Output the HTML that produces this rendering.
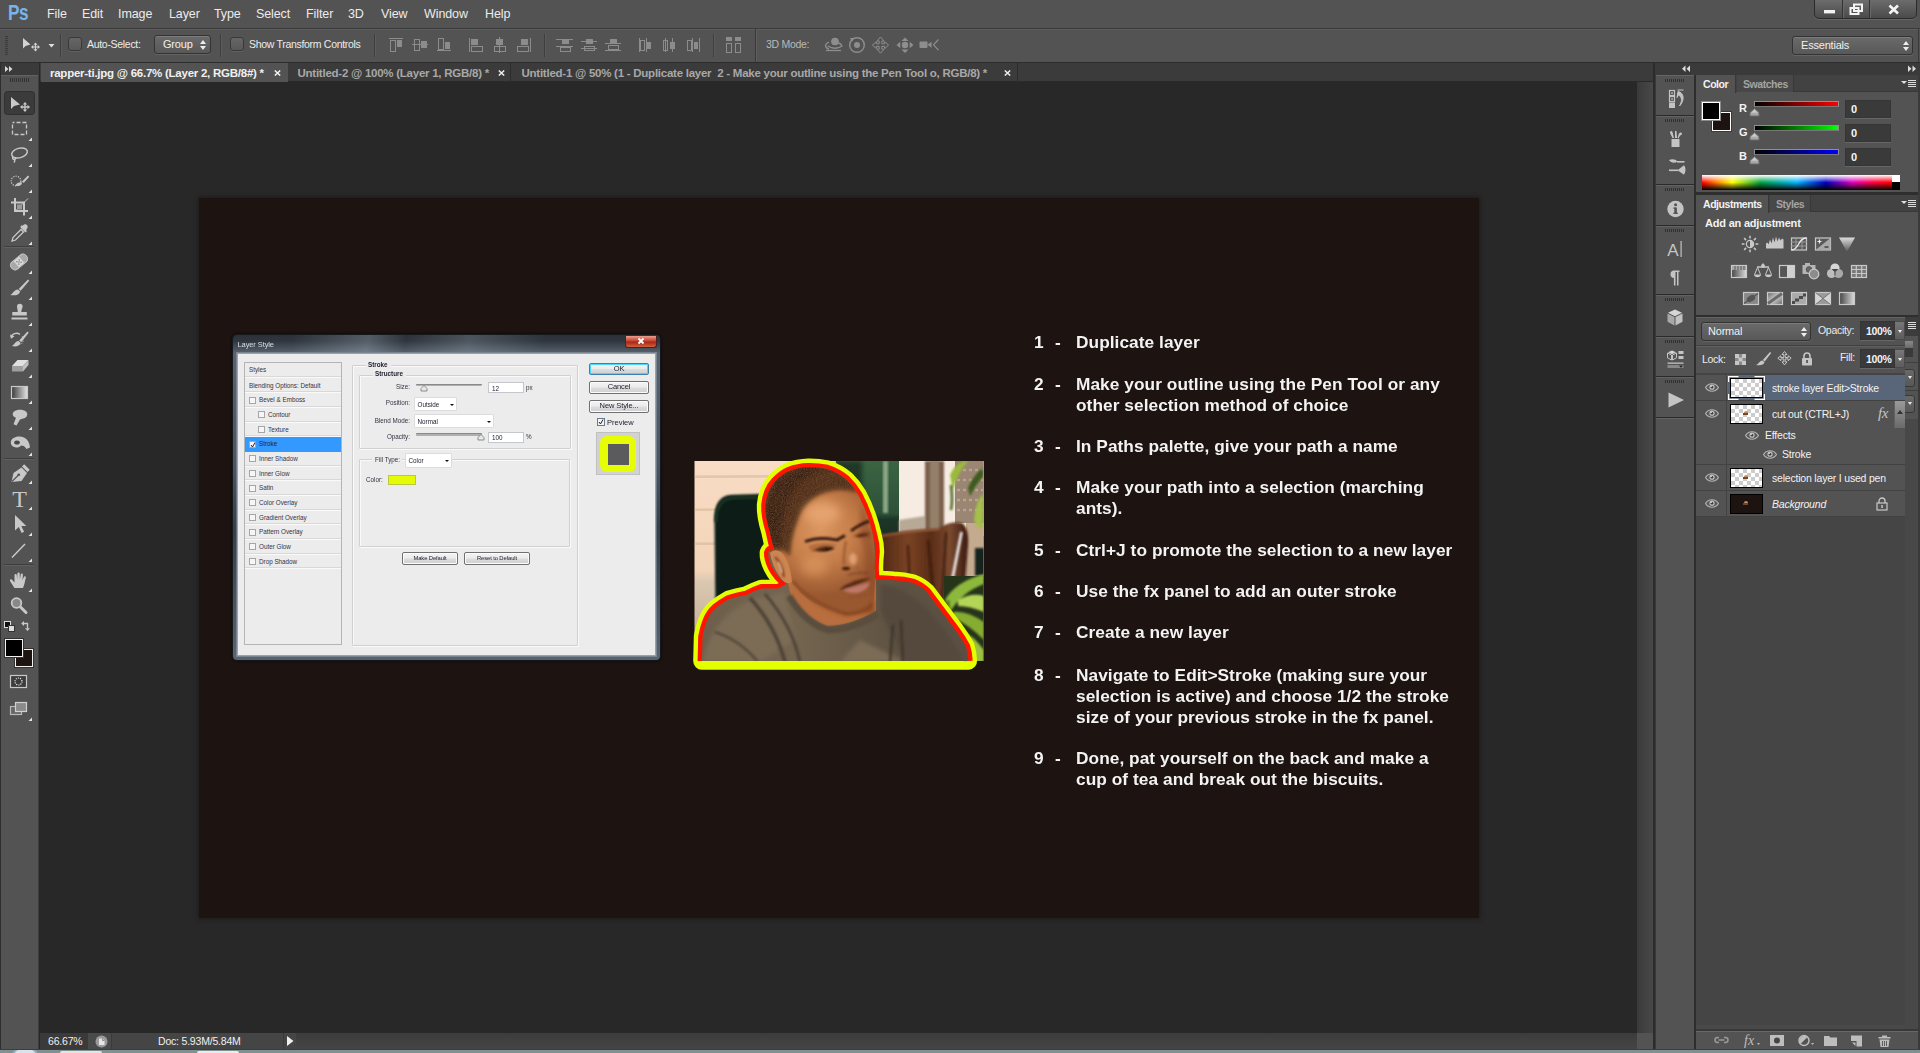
<!DOCTYPE html>
<html><head><meta charset="utf-8"><title>Photoshop</title>
<style>
*{box-sizing:border-box;margin:0;padding:0}
html,body{width:1920px;height:1053px;overflow:hidden;background:#282828;font-family:"Liberation Sans",sans-serif;font-size:11px;color:#e4e4e4}
.a{position:absolute}
#menubar{left:0;top:0;width:1920px;height:29px;background:#535353;border-bottom:1px solid #3a3a3a}
#menubar span{position:absolute;top:5.5px;font-size:13.5px;color:#ececec;letter-spacing:-0.1px;transform:scaleX(.925);transform-origin:0 0;white-space:nowrap}
#menubar b{position:absolute;left:7.5px;top:1px;font-size:21.5px;font-weight:bold;color:#78b4ea;transform:scaleX(.8);transform-origin:0 0;letter-spacing:-0.5px}
#optbar{left:0;top:29px;width:1920px;height:34px;background:#535353;box-shadow:inset 0 1px 0 #5e5e5e;border-bottom:1px solid #2c2c2c}
#tabbar{left:40px;top:63px;width:1613px;height:19px;background:#3b3b3b;border-bottom:1px solid #2a2a2a}
.tab{position:absolute;top:0;height:19px;font-size:11.5px;line-height:21px;color:#a8a8a8;white-space:nowrap;font-weight:bold;letter-spacing:-0.25px}
.tab i{position:absolute;top:0;font-style:normal;font-weight:bold;font-size:11px}
.tab.act{background:#535353;color:#f0f0f0}
#toolbar{left:0;top:63px;width:39px;height:986px;background:#535353;border-right:1px solid #3c3c3c}
#canvas{left:40px;top:82px;width:1597px;height:951px;background:#282828}
#doc{left:199px;top:198px;width:1280px;height:720px;background:#1d1311;box-shadow:0 0 4px 1px rgba(20,20,20,.6)}
#status{left:40px;top:1033px;width:1597px;height:16px;background:#454545;overflow:hidden}
#taskbar{left:0;top:1049px;width:1920px;height:4px;background:#7e9391;border-top:1px solid #36403f;overflow:hidden}

.cb{width:14px;height:14px;border:1px solid #393939;border-radius:3px;background:linear-gradient(#666,#585858);box-shadow:0 1px 0 rgba(255,255,255,.08)}
.ot{font-size:10.5px;color:#ececec;white-space:nowrap;letter-spacing:-0.3px}
.dd{height:19px;border:1px solid #333;border-radius:3px;background:linear-gradient(#6a6a6a,#585858);box-shadow:0 1px 0 rgba(255,255,255,.1), inset 0 1px 0 rgba(255,255,255,.12)}
.dd span{position:absolute;top:2px;font-size:11px;color:#f0f0f0;letter-spacing:-0.2px}
.ud{position:absolute;top:4px;width:7px;height:10px}
.ud:before{content:"";position:absolute;left:0;top:0;border:3.5px solid transparent;border-top:0;border-bottom:4px solid #ededed}
.ud:after{content:"";position:absolute;left:0;top:6px;border:3.5px solid transparent;border-bottom:0;border-top:4px solid #ededed}

.b{font-weight:bold;color:#f2f2f2;font-size:11px;white-space:nowrap;letter-spacing:-0.2px}
.ptabs{position:absolute;left:0;width:224px;height:17px;background:#424242;border-bottom:1px solid #383838}
.pt{position:absolute;top:0;height:17px;background:#484848;border-right:1px solid #383838}
.pt span{position:absolute;top:3px;font-size:10.5px;font-weight:bold;color:#a4a4a4;letter-spacing:-0.45px;white-space:nowrap}
.pt.on{background:#535353;height:18px}
.pt.on span{color:#f2f2f2}
.pm{position:absolute;left:205px;top:5px;width:15px;height:8px}
.pm:before{content:"";position:absolute;left:0;top:1px;border:3px solid transparent;border-bottom:0;border-top:3.500px solid #ddd}
.pm:after{content:"";position:absolute;left:7px;top:0;width:8px;height:1px;background:#ddd;box-shadow:0 2px 0 #ddd,0 4px 0 #ddd,0 6px 0 #ddd}
.vb{background:#3a3a3a;border:1px solid #353535;box-shadow:0 1px 0 rgba(255,255,255,.12)}
.vb span{position:absolute;top:2px;font-size:11px;font-weight:bold;color:#f4f4f4}

.lt{font-size:10.5px;color:#ececec;white-space:nowrap;letter-spacing:-0.3px}
.ln{font-size:10.5px;color:#f2f2f2;white-space:nowrap;letter-spacing:-0.2px}
.ab{width:10px;height:19px;background:linear-gradient(#777,#5c5c5c);border:1px solid #4a4a4a;border-left:0}
.ab:after{content:"";position:absolute;left:3px;top:8px;border:2.500px solid transparent;border-bottom:0;border-top:3px solid #eee}

#steps{position:absolute;left:0;top:0;filter:blur(.35px)}
.st{position:absolute;left:0;font:bold 17.3px/21px "Liberation Sans",sans-serif;color:#f3f3f3;letter-spacing:.05px;white-space:nowrap}
.st b{position:absolute;top:0;font-weight:bold}
.st p{position:absolute;top:0}
#dlg{border-radius:4px;background:linear-gradient(180deg,#2b3138 0,#2f363e 6px,#4a535e 14px,#58626e 18px,#4a5561 40%,#353e49 60%,#59636f 100%);box-shadow:0 0 0 1px #15181c, 0 0 3px 1px rgba(0,0,0,.6);filter:blur(.3px);font-family:"Liberation Sans",sans-serif}
#dlg:before{content:"";position:absolute;left:60px;top:0;width:250px;height:17px;background:linear-gradient(100deg,rgba(255,255,255,0) 0,rgba(200,215,230,.25) 30%,rgba(255,255,255,0) 45%,rgba(200,215,230,.2) 70%,rgba(255,255,255,0) 100%)}
#dbody{background:#ececec;box-shadow:inset 0 0 0 1px #98a2ac,0 0 0 1px rgba(200,215,230,.3)}
.dt{font-size:6.3px;color:#334;white-space:nowrap;letter-spacing:0}
.gl{font-weight:bold;color:#223;background:#ececec;padding:0 3px 0 2px}
.grp{border:1px solid #d0d0d0;box-shadow:inset 1px 1px 0 #fafafa,1px 1px 0 #fafafa;border-radius:1px}
</style></head><body>
<div id="menubar" class="a">
<b>Ps</b><span style="left:47px">File</span><span style="left:82px">Edit</span><span style="left:118px">Image</span><span style="left:169px">Layer</span><span style="left:214px">Type</span><span style="left:256px">Select</span><span style="left:306px">Filter</span><span style="left:348px">3D</span><span style="left:381px">View</span><span style="left:424px">Window</span><span style="left:485px">Help</span>
<div class="a" id="winctl" style="left:1814px;top:-1px;width:103px;height:20px;border:1px solid #2b2b2b;border-radius:0 0 5px 5px;background:linear-gradient(#6c6c6c,#4a4a4a);box-shadow:0 1px 0 rgba(255,255,255,.12)">
<div class="a" style="left:27px;top:0;width:1px;height:18px;background:#333"></div><div class="a" style="left:28px;top:0;width:1px;height:18px;background:#686868"></div>
<div class="a" style="left:54px;top:0;width:1px;height:18px;background:#333"></div><div class="a" style="left:55px;top:0;width:1px;height:18px;background:#686868"></div>
<svg class="a" style="left:0;top:0" width="101" height="19" viewBox="0 0 101 19"><rect x="9" y="10" width="11" height="3.4" fill="#f4f4f4"/>
<path d="M39 4.5 h8 v6.5 h-8z M35.5 8 h8 v6 h-8z" fill="none" stroke="#f4f4f4" stroke-width="2"/>
<path d="M74.5 5.5 l8.5 8 M83 5.5 l-8.5 8" stroke="#f4f4f4" stroke-width="2.6" fill="none"/></svg>
</div></div>
<div id="optbar" class="a"><svg class="a" style="left:0;top:0" width="1920" height="33" viewBox="0 0 1920 33" shape-rendering="crispEdges"><rect x="5" y="7" width="3" height="1" fill="#3a3a3a"/><rect x="5" y="9" width="3" height="1" fill="#3a3a3a"/><rect x="5" y="11" width="3" height="1" fill="#3a3a3a"/><rect x="5" y="13" width="3" height="1" fill="#3a3a3a"/><rect x="5" y="15" width="3" height="1" fill="#3a3a3a"/><rect x="5" y="17" width="3" height="1" fill="#3a3a3a"/><rect x="5" y="19" width="3" height="1" fill="#3a3a3a"/><rect x="5" y="21" width="3" height="1" fill="#3a3a3a"/><rect x="5" y="23" width="3" height="1" fill="#3a3a3a"/><rect x="5" y="25" width="3" height="1" fill="#3a3a3a"/><path shape-rendering="geometricPrecision" d="M23 9 L23 19.5 L25.6 17 L30.5 15.600000000000001 Z" fill="#d4d4d4"/><path shape-rendering="geometricPrecision" d="M35.5 13.5 l-2 2.3 h1.4 v1.6 h-1.6 v-1.4 l-2.3 2 l2.3 2 v-1.4 h1.6 v1.6 h-1.4 l2 2.3 l2 -2.3 h-1.4 v-1.6 h1.6 v1.4 l2.3 -2 l-2.3 -2 v1.4 h-1.6 v-1.6 h1.4 Z" fill="#d4d4d4"/><path shape-rendering="geometricPrecision" d="M48.5 15 h6 l-3 3.4 Z" fill="#e0e0e0"/><rect x="60" y="5" width="1" height="23" fill="#3e3e3e"/><rect x="61" y="5" width="1" height="23" fill="#5c5c5c"/><rect x="220" y="5" width="1" height="23" fill="#3e3e3e"/><rect x="221" y="5" width="1" height="23" fill="#5c5c5c"/><rect x="374" y="5" width="1" height="23" fill="#3e3e3e"/><rect x="375" y="5" width="1" height="23" fill="#5c5c5c"/><rect x="544" y="5" width="1" height="23" fill="#3e3e3e"/><rect x="545" y="5" width="1" height="23" fill="#5c5c5c"/><rect x="713" y="5" width="1" height="23" fill="#3e3e3e"/><rect x="714" y="5" width="1" height="23" fill="#5c5c5c"/><rect x="755" y="0" width="1" height="33" fill="#3a3a3a"/><rect x="756" y="0" width="1" height="33" fill="#5e5e5e"/><rect x="389" y="9" width="14" height="1" fill="#8c8c8c"/><rect x="390.5" y="11.5" width="5" height="11" fill="none" stroke="#8c8c8c"/><rect x="397" y="11" width="5" height="7" fill="#8c8c8c"/><rect x="412" y="15" width="16" height="1" fill="#8c8c8c"/><rect x="414.5" y="10.5" width="5" height="11" fill="none" stroke="#8c8c8c"/><rect x="421" y="12" width="6" height="7" fill="#8c8c8c"/><rect x="437" y="21" width="14" height="1" fill="#8c8c8c"/><rect x="438.5" y="9.5" width="5" height="11" fill="none" stroke="#8c8c8c"/><rect x="445" y="13" width="5" height="7" fill="#8c8c8c"/><rect x="469" y="9" width="1" height="14" fill="#8c8c8c"/><rect x="471" y="10" width="7" height="6" fill="#8c8c8c"/><rect x="471.5" y="17.5" width="11" height="5" fill="none" stroke="#8c8c8c"/><rect x="499" y="8" width="1" height="16" fill="#8c8c8c"/><rect x="496" y="10" width="7" height="6" fill="#8c8c8c"/><rect x="494.5" y="17.5" width="11" height="5" fill="none" stroke="#8c8c8c"/><rect x="530" y="9" width="1" height="14" fill="#8c8c8c"/><rect x="521" y="10" width="7" height="6" fill="#8c8c8c"/><rect x="517.5" y="17.5" width="11" height="5" fill="none" stroke="#8c8c8c"/><rect x="556" y="10" width="17" height="1" fill="#8c8c8c"/><rect x="562" y="11" width="7" height="4" fill="#8c8c8c"/><rect x="556" y="17" width="17" height="1" fill="#8c8c8c"/><rect x="560.5" y="18.5" width="10" height="4" fill="none" stroke="#8c8c8c"/><rect x="581" y="12" width="16" height="1" fill="#8c8c8c"/><rect x="586" y="10" width="7" height="5" fill="#8c8c8c"/><rect x="581" y="19" width="16" height="1" fill="#8c8c8c"/><rect x="584.5" y="17.5" width="10" height="4" fill="none" stroke="#8c8c8c"/><rect x="610" y="10" width="7" height="4" fill="#8c8c8c"/><rect x="605" y="14" width="16" height="1" fill="#8c8c8c"/><rect x="608.5" y="16.5" width="10" height="4" fill="none" stroke="#8c8c8c"/><rect x="605" y="21" width="16" height="1" fill="#8c8c8c"/><rect x="639" y="9" width="1" height="14" fill="#8c8c8c"/><rect x="640.5" y="11.5" width="4" height="10" fill="none" stroke="#8c8c8c"/><rect x="646" y="9" width="1" height="14" fill="#8c8c8c"/><rect x="647" y="13" width="4" height="7" fill="#8c8c8c"/><rect x="665" y="9" width="1" height="14" fill="#8c8c8c"/><rect x="663.5" y="11.5" width="4" height="10" fill="none" stroke="#8c8c8c"/><rect x="672" y="9" width="1" height="14" fill="#8c8c8c"/><rect x="670" y="13" width="5" height="7" fill="#8c8c8c"/><rect x="687.5" y="11.5" width="4" height="10" fill="none" stroke="#8c8c8c"/><rect x="692" y="9" width="1" height="14" fill="#8c8c8c"/><rect x="694" y="13" width="4" height="7" fill="#8c8c8c"/><rect x="699" y="9" width="1" height="14" fill="#8c8c8c"/><rect x="726" y="8" width="6" height="4" fill="#8c8c8c"/><rect x="726.5" y="14.5" width="5" height="9" fill="none" stroke="#8c8c8c"/><rect x="735" y="8" width="6" height="4" fill="#8c8c8c"/><rect x="735.5" y="14.5" width="5" height="9" fill="none" stroke="#8c8c8c"/><g shape-rendering="geometricPrecision" fill="none" stroke="#8e8e8e" stroke-width="1.3"><circle cx="835" cy="12.5" r="3.2" fill="#8e8e8e"/><path shape-rendering="geometricPrecision" d="M829 20 c-4 -1 -5 -5 0 -7 M828 17 c4 3 10 3 14 0 c-1 -2 -2 -3 -4 -3"/><path shape-rendering="geometricPrecision" d="M826 21.5 h15"/></g><g shape-rendering="geometricPrecision" fill="none" stroke="#8e8e8e" stroke-width="1.4"><circle cx="857" cy="16" r="7.3"/><circle cx="857" cy="16" r="3" fill="#8e8e8e" stroke="none"/><path shape-rendering="geometricPrecision" d="M850 9 l4 0 l-2 4z" fill="#8e8e8e" stroke="none"/></g><path shape-rendering="geometricPrecision" d="M880.5 8 l-3.5 4 h2.2 v2.8 h-2.8 v-2.2 l-4 3.5 l4 3.5 v-2.2 h2.8 v2.8 h-2.2 l3.5 4 l3.5 -4 h-2.2 v-2.8 h2.8 v2.2 l4 -3.5 l-4 -3.5 v2.2 h-2.8 v-2.8 h2.2 Z" fill="none" stroke="#8e8e8e" stroke-width="1"/><g shape-rendering="geometricPrecision" fill="#8e8e8e"><circle cx="905" cy="16" r="3.2"/><path shape-rendering="geometricPrecision" d="M905 8.5 l-3.5 3.5 h7z M905 24 l-3.5 -3.5 h7z M896.5 16 l3.8 -3.3 v6.6z M913.5 16 l-3.8 -3.3 v6.6z"/></g><g shape-rendering="geometricPrecision" fill="#8e8e8e"><rect x="919.5" y="12.5" width="8" height="6.5" rx="1"/><path shape-rendering="geometricPrecision" d="M927.5 15.700000000000003 l4 -3 v6z"/><path shape-rendering="geometricPrecision" d="M938.5 10.5 l-5 5.3 l5 5.3" fill="none" stroke="#8e8e8e" stroke-width="1.2"/></g></svg>
<div class="cb a" style="left:68px;top:8px"></div>
<span class="ot a" style="left:87px;top:9px">Auto-Select:</span>
<div class="dd a" style="left:154px;top:6px;width:57px"><span style="left:8px">Group</span><i class="ud" style="left:45px"></i></div>
<div class="cb a" style="left:230px;top:8px"></div>
<span class="ot a" style="left:249px;top:9px">Show Transform Controls</span>
<span class="ot a" style="left:766px;top:9px;color:#b9b9b9">3D Mode:</span>
<div class="dd a" style="left:1792px;top:7px;width:121px"><span style="left:8px">Essentials</span><i class="ud" style="left:110px"></i></div>
<div class="a" style="left:1918px;top:0;width:1px;height:33px;background:#3a3a3a"></div>
</div>
<div id="toolbar" class="a"><svg class="a" style="left:0;top:0" width="39" height="986" viewBox="0 63 39 986"><rect x="0" y="63" width="38" height="12" fill="#3a3a3a"/><path d="M5 66 l3.5 3 l-3.5 3z M9 66 l3.5 3 l-3.5 3z" fill="#d8d8d8"/><rect x="0" y="75" width="38" height="1" fill="#626262"/><rect x="10" y="78" width="1" height="4" fill="#333" shape-rendering="crispEdges"/><rect x="12" y="78" width="1" height="4" fill="#333" shape-rendering="crispEdges"/><rect x="14" y="78" width="1" height="4" fill="#333" shape-rendering="crispEdges"/><rect x="16" y="78" width="1" height="4" fill="#333" shape-rendering="crispEdges"/><rect x="18" y="78" width="1" height="4" fill="#333" shape-rendering="crispEdges"/><rect x="20" y="78" width="1" height="4" fill="#333" shape-rendering="crispEdges"/><rect x="22" y="78" width="1" height="4" fill="#333" shape-rendering="crispEdges"/><rect x="24" y="78" width="1" height="4" fill="#333" shape-rendering="crispEdges"/><rect x="26" y="78" width="1" height="4" fill="#333" shape-rendering="crispEdges"/><rect x="28" y="78" width="1" height="4" fill="#333" shape-rendering="crispEdges"/><rect x="4.5" y="91.5" width="30" height="23" rx="3" fill="#3b3b3b" stroke="#303030"/><path d="M11 97 v12 l3 -3 l6 -1.5z" fill="#c8c8c8"/><path d="M25 102 l-2.2 2.5 h1.5 v1.8 h-1.8 v-1.5 l-2.5 2.2 l2.5 2.2 v-1.5 h1.8 v1.8 h-1.5 l2.2 2.5 l2.2 -2.5 h-1.5 v-1.8 h1.8 v1.5 l2.5 -2.2 l-2.5 -2.2 v1.5 h-1.8 v-1.8 h1.5z" fill="#c8c8c8"/><rect x="12.5" y="122.5" width="14" height="12" fill="none" stroke="#c8c8c8" stroke-width="1.3" stroke-dasharray="4 2" stroke-dashoffset="2"/><path d="M32 137.5 v3.5 h-3.5z" fill="#e4e4e4"/><g fill="none" stroke="#c8c8c8" stroke-width="1.5"><ellipse cx="19.5" cy="153" rx="8" ry="4.8" transform="rotate(-15 19.5 153)"/><path d="M13 156.5 c-1 1.5 0 3 1.5 3 c1 0 1.5 -1 0.5 -2 M14.5 159.5 c0.5 1 0.5 2 -0.5 3"/></g><path d="M32 163.5 v3.5 h-3.5z" fill="#e4e4e4"/><circle cx="16" cy="181" r="4.8" fill="none" stroke="#c8c8c8" stroke-width="1.2" stroke-dasharray="1.2 1.2"/><path d="M15 185.5 c2 -3 5 -4 7 -3 c0 3 -3 4.5 -7 3z" fill="#c8c8c8"/><path d="M22 181.5 l6 -6 l1.2 1.2 l-5.5 6.3z" fill="#c8c8c8"/><path d="M32 189.5 v3.5 h-3.5z" fill="#e4e4e4"/><g fill="none" stroke="#c8c8c8" stroke-width="2"><path d="M15 198 v13 h13 M11 202.5 h13 v13"/></g><path d="M16.5 210 l11.5 -11.5" stroke="#c8c8c8" stroke-width="1"/><rect x="17" y="204.5" width="5" height="5" fill="#9a9a9a"/><path d="M32 215.5 v3.5 h-3.5z" fill="#e4e4e4"/><g><path d="M12 241 l1 -3.5 l8 -8 l2.5 2.5 l-8 8z" fill="none" stroke="#c8c8c8" stroke-width="1.3"/><path d="M20.5 227.5 l5 5 l1.5 -1.5 l-1 -1 c2 -2 2 -4 1 -5 c-1 -1 -3 -1 -5 1 l-1 -1z" fill="#c8c8c8"/></g><path d="M32 241.5 v3.5 h-3.5z" fill="#e4e4e4"/><rect x="4" y="246" width="30" height="1" fill="#3e3e3e"/><rect x="4" y="247" width="30" height="1" fill="#606060"/><g transform="rotate(-40 19 262)"><rect x="9.5" y="257.5" width="19" height="9" rx="4" fill="#a8a8a8" stroke="#c8c8c8" stroke-width="1"/><rect x="15.5" y="258" width="7" height="8" fill="#d8d8d8"/><g fill="#777"><circle cx="17.5" cy="260.5" r=".7"/><circle cx="20.5" cy="260.5" r=".7"/><circle cx="17.5" cy="263.5" r=".7"/><circle cx="20.5" cy="263.5" r=".7"/><circle cx="19" cy="262" r=".7"/></g></g><path d="M32 270.5 v3.5 h-3.5z" fill="#e4e4e4"/><path d="M28 279.5 l1.2 1.2 l-8.5 10 l-2 -1.7z" fill="#c8c8c8"/><path d="M18 289.5 l2.2 2 c-1 3.5 -5 4.5 -10 3.5 c3 -1 3 -5 7.800 -5.500z" fill="#c8c8c8"/><path d="M32 296.5 v3.5 h-3.5z" fill="#e4e4e4"/><path d="M17 306.500 a2.800 2.800 0 0 1 5.600 0 c0 2 -1.300 3 -1.300 5.500 h5.500 v3.500 h-14.500 v-3.500 h5.500 c0 -2.500 -0.800 -3.500 -0.800 -5.500z" fill="#c8c8c8"/><rect x="11.500" y="317.500" width="16" height="2" fill="#c8c8c8"/><path d="M32 322.5 v3.5 h-3.5z" fill="#e4e4e4"/><path d="M27.500 331.500 l1.200 1.200 l-7.500 9.500 l-2 -1.700z" fill="#c8c8c8"/><path d="M18.500 341 l2.200 2 c-1 3 -4.500 4 -9 3 c3 -1 3 -4.500 6.800 -5z" fill="#c8c8c8"/><path d="M11 337.500 a5.500 5 0 0 1 9 -3" fill="none" stroke="#c8c8c8" stroke-width="1.400"/><path d="M10 334.500 l1.200 4.200 l3.300 -2.500z" fill="#c8c8c8"/><path d="M22 336 a6 6 0 0 1 -2 9" fill="none" stroke="#c8c8c8" stroke-width="1" stroke-dasharray="1 1.500"/><path d="M32 348.5 v3.5 h-3.5z" fill="#e4e4e4"/><path d="M12 366 l5.500 -6 h11 l-5.500 6z" fill="#e0e0e0"/><path d="M12 366 h11 v5.500 h-11z" fill="#9f9f9f"/><path d="M23 366 l5.500 -6 v5 l-5.500 6.500z" fill="#c0c0c0"/><path d="M32 374.5 v3.5 h-3.5z" fill="#e4e4e4"/><defs><linearGradient id="tg"><stop offset="0" stop-color="#3a3a3a"/><stop offset="1" stop-color="#e6e6e6"/></linearGradient></defs><rect x="11.500" y="386.500" width="16" height="12" fill="url(#tg)" stroke="#c8c8c8" stroke-width="1.200"/><path d="M32 400.5 v3.5 h-3.5z" fill="#e4e4e4"/><path d="M14 411.500 c3 -2.500 9 -2.500 12 0 c2 2 1.500 5 -1 6.500 l-5 1.500 l-3.500 6 l-3 -1.200 l2.500 -6.500 c-3 -1 -4.500 -4 -2 -6.300z" fill="#c8c8c8"/><path d="M32 426.5 v3.5 h-3.5z" fill="#e4e4e4"/><path d="M11 441 c1.500 -4 8 -5.500 13 -3.500 c3.500 1.500 5.500 5 6 10 l-3.500 1.500 c-1.500 -2.500 -3 -3.500 -5.500 -3.500 c-2 3 -8 2.500 -9.500 -0.500 c-0.800 -1.500 -0.800 -2.800 -0.500 -4z" fill="#c8c8c8"/><ellipse cx="17" cy="442.500" rx="2.800" ry="2" fill="#484848"/><path d="M32 452.5 v3.5 h-3.5z" fill="#e4e4e4"/><rect x="4" y="458" width="30" height="1" fill="#3e3e3e"/><rect x="4" y="459" width="30" height="1" fill="#606060"/><path d="M11.500 482 l2 -9 l8 -5.500 l5.500 5.500 l-5.500 8z" fill="#c8c8c8"/><path d="M22 466.500 l2.200 -2.200 l5.500 5.500 l-2.200 2.200z" fill="#c8c8c8"/><path d="M12 481.500 l6.500 -6.500" stroke="#505050" stroke-width="1.100"/><circle cx="18.800" cy="474.700" r="1.300" fill="#505050"/><path d="M32 480.5 v3.5 h-3.5z" fill="#e4e4e4"/><text x="19.500" y="507" font-family="Liberation Serif,serif" font-size="24" text-anchor="middle" fill="#c8c8c8">T</text><path d="M32 506.5 v3.5 h-3.5z" fill="#e4e4e4"/><path d="M15 515 v15.500 l3.800 -3.500 l2.800 6 l2.500 -1.200 l-2.800 -5.800 h5z" fill="#c8c8c8"/><path d="M32 532.5 v3.5 h-3.5z" fill="#e4e4e4"/><path d="M12 557.500 l13 -13.500" stroke="#c8c8c8" stroke-width="1.500"/><path d="M32 558.5 v3.5 h-3.5z" fill="#e4e4e4"/><rect x="4" y="564" width="30" height="1" fill="#3e3e3e"/><rect x="4" y="565" width="30" height="1" fill="#606060"/><path d="M14.500 588 c-1.500 -2.500 -3.500 -5 -4.500 -7 c-0.500 -1.500 1.200 -2.300 2.300 -1 l2.200 2.500 v-7.500 c0 -1.500 2.200 -1.500 2.300 0 l0.300 4.500 l0.300 -6 c0 -1.500 2.300 -1.500 2.300 0 l0.200 6 l0.800 -5 c0.200 -1.500 2.300 -1.200 2.200 0.300 l-0.400 5.500 l1.300 -3.200 c0.500 -1.300 2.300 -0.800 2 0.700 c-0.800 3.500 -1.300 7 -2.800 10.200z" fill="#c8c8c8"/><path d="M32 588.5 v3.5 h-3.5z" fill="#e4e4e4"/><circle cx="16.500" cy="603" r="4.800" fill="#888" stroke="#c8c8c8" stroke-width="1.800"/><path d="M20.500 607 l5.500 5.500" stroke="#c8c8c8" stroke-width="3" stroke-linecap="round"/><rect x="4.500" y="621.500" width="6" height="6" fill="#111" stroke="#ddd"/><rect x="8.500" y="625.500" width="6" height="6" fill="#ddd" stroke="#333"/><path d="M23 623.500 h4.500 v5" fill="none" stroke="#c8c8c8" stroke-width="1.300"/><path d="M21.200 623.500 l2.800 -2.500 v5z M27.500 631 l-2.500 -2.800 h5z" fill="#c8c8c8"/><rect x="15.500" y="649.500" width="17" height="17" fill="#1d1311" stroke="#f0f0f0" stroke-width="1"/><rect x="14.500" y="648.500" width="19" height="19" fill="none" stroke="#333" stroke-width="1"/><rect x="4.500" y="638.500" width="19" height="19" fill="none" stroke="#333"/><rect x="5.500" y="639.500" width="17" height="17" fill="#000" stroke="#f0f0f0" stroke-width="1"/><rect x="10.500" y="675.500" width="16" height="12" fill="#3c3c3c" stroke="#c8c8c8" stroke-width="1.200"/><circle cx="18.500" cy="681.500" r="3.500" fill="none" stroke="#f0f0f0" stroke-width="1.200" stroke-dasharray="1.100 1.100"/><rect x="10.500" y="706.500" width="11" height="8" fill="#666" stroke="#b8b8b8" stroke-width="1.200"/><rect x="15.500" y="702.500" width="11" height="9" fill="#8a8a8a" stroke="#d0d0d0" stroke-width="1.200"/><path d="M32 717.5 v3.5 h-3.5z" fill="#e4e4e4"/><rect x="0" y="63" width="1" height="986" fill="#2e2e2e"/></svg></div>
<div id="tabbar" class="a">
<div class="tab act" style="left:1px;width:247px;padding-left:9px">rapper-ti.jpg @ 66.7% (Layer 2, RGB/8#) *<svg style="position:absolute;left:233px;top:7px" width="7" height="6"><path d="M0.800 0.500 l5.400 5 M6.200 0.500 l-5.400 5" stroke="#f4f4f4" stroke-width="1.500"/></svg></div>
<div class="tab" style="left:248px;width:223px;padding-left:9.5px;border-right:1px solid #2c2c2c">Untitled-2 @ 100% (Layer 1, RGB/8) *<svg style="position:absolute;left:210px;top:7px" width="7" height="6"><path d="M0.800 0.500 l5.400 5 M6.200 0.500 l-5.400 5" stroke="#ededed" stroke-width="1.500"/></svg></div>
<div class="tab" style="left:471px;width:507px;padding-left:10.500px;border-right:1px solid #2c2c2c;white-space:pre">Untitled-1 @ 50% (1 - Duplicate layer  2 - Make your outline using the Pen Tool o, RGB/8) *<svg style="position:absolute;left:493px;top:7px" width="7" height="6"><path d="M0.800 0.500 l5.400 5 M6.200 0.500 l-5.400 5" stroke="#ededed" stroke-width="1.500"/></svg></div>
</div>
<div id="canvas" class="a"></div>
<div id="doc" class="a"><div id="steps"><div class="st" style="top:133.8px"><b style="left:835px">1</b><b style="left:856px">-</b><p style="left:877px">Duplicate layer</p></div><div class="st" style="top:175.9px"><b style="left:835px">2</b><b style="left:856px">-</b><p style="left:877px">Make your outline using the Pen Tool or any<br>other selection method of choice</p></div><div class="st" style="top:238.1px"><b style="left:835px">3</b><b style="left:856px">-</b><p style="left:877px">In Paths palette, give your path a name</p></div><div class="st" style="top:279.1px"><b style="left:835px">4</b><b style="left:856px">-</b><p style="left:877px">Make your path into a selection (marching<br>ants).</p></div><div class="st" style="top:341.9px"><b style="left:835px">5</b><b style="left:856px">-</b><p style="left:877px">Ctrl+J to promote the selection to a new layer</p></div><div class="st" style="top:383.3px"><b style="left:835px">6</b><b style="left:856px">-</b><p style="left:877px">Use the fx panel to add an outer stroke</p></div><div class="st" style="top:424.1px"><b style="left:835px">7</b><b style="left:856px">-</b><p style="left:877px">Create a new layer</p></div><div class="st" style="top:466.9px"><b style="left:835px">8</b><b style="left:856px">-</b><p style="left:877px">Navigate to Edit&gt;Stroke (making sure your<br>selection is active) and choose 1/2 the stroke<br>size of your previous stroke in the fx panel.</p></div><div class="st" style="top:550.2px"><b style="left:835px">9</b><b style="left:856px">-</b><p style="left:877px">Done, pat yourself on the back and make a<br>cup of tea and break out the biscuits.</p></div></div><svg class="a" id="photo" style="left:0;top:0;filter:blur(.4px)" width="1280" height="720" viewBox="199 198 1280 720"><defs>
<clipPath id="pc"><rect x="694.5" y="461" width="289" height="200"/></clipPath>
<clipPath id="sc"><path d="M701.9 661 L702.5 636.4 Q704 628 706.8 621 Q710 613 715.6 608 Q722 603 728.7 599.3 Q737 596.5 746 595 Q754 591 761.4 588.4 L777.8 588.4 L786.5 584 Q777 577 772 567 Q768 559 768.300 552.800 Q770 548 774.500 550.500 Q772 542 770 532 Q765 516 765.500 505 Q767 490 775 481.500 Q782 474 789.200 470.900 Q798 467.500 808.200 467.200 Q818 467 827.200 469 Q838 472.500 846.200 479.500 Q853 486 858 494.600 Q864 506 867.500 516 Q871 526 873 535 Q875.500 544 875.500 551.600 Q874.500 560 874.500 568.200 L875 579 L893.700 580.200 Q904 580.500 912.600 582.800 Q921 586 926.900 591.900 L941.100 610.900 L955.400 629.900 Q962 639 966 646.500 Q968 653 968.400 661 Z"/></clipPath>
<filter id="b1" x="-20%" y="-20%" width="140%" height="140%"><feGaussianBlur stdDeviation="1"/></filter>
<filter id="b2" x="-20%" y="-20%" width="140%" height="140%"><feGaussianBlur stdDeviation="2.2"/></filter>
<filter id="b3" x="-30%" y="-30%" width="160%" height="160%"><feGaussianBlur stdDeviation="5"/></filter>
<filter id="grain" x="0" y="0" width="100%" height="100%"><feTurbulence type="fractalNoise" baseFrequency="1.1" numOctaves="2" seed="3" result="n"/><feColorMatrix in="n" type="matrix" values="0 0 0 0 0.18  0 0 0 0 0.09  0 0 0 0 0.04  0.9 0.9 0 0 -0.55"/><feComposite operator="in" in2="SourceGraphic"/></filter>
<linearGradient id="wall" x1="0" y1="0" x2="0" y2="1"><stop offset="0" stop-color="#f8dcc4"/><stop offset=".55" stop-color="#f2d4b8"/><stop offset=".6" stop-color="#dcc8b0"/><stop offset="1" stop-color="#b8a68e"/></linearGradient>
<linearGradient id="door" x1="0" y1="0" x2="0" y2="1"><stop offset="0" stop-color="#3a6442"/><stop offset=".4" stop-color="#2e5238"/><stop offset=".45" stop-color="#1c3626"/><stop offset="1" stop-color="#10201a"/></linearGradient>
<linearGradient id="lchair" x1="0" y1="0" x2="1" y2="0"><stop offset="0" stop-color="#4a2212"/><stop offset=".35" stop-color="#7a4424"/><stop offset=".6" stop-color="#5a2c16"/><stop offset=".8" stop-color="#7a4a30"/><stop offset="1" stop-color="#3a1a10"/></linearGradient>
<radialGradient id="skin" cx="820" cy="530" r="66" gradientUnits="userSpaceOnUse"><stop offset="0" stop-color="#dc9660"/><stop offset=".5" stop-color="#c67e4a"/><stop offset="1" stop-color="#9a5830"/></radialGradient>
<linearGradient id="shirt" x1="0" y1="0" x2="1" y2="0"><stop offset="0" stop-color="#6c5e4a"/><stop offset=".35" stop-color="#74654f"/><stop offset=".7" stop-color="#5e5242"/><stop offset="1" stop-color="#585044"/></linearGradient>
</defs><g clip-path="url(#pc)"><rect x="694" y="461" width="290" height="200" fill="url(#wall)"/><path d="M694 477 L790 476" stroke="#d0ac8c" stroke-width="1.300" filter="url(#b1)"/><path d="M694 510 L790 509" stroke="#d0ac8c" stroke-width="1.300" filter="url(#b1)"/><path d="M694 544 L790 543" stroke="#d0ac8c" stroke-width="1.300" filter="url(#b1)"/><path d="M716 662 L714.500 520 Q714 497 730 495 L790 493 L790 662 Z" fill="#0b1a13" filter="url(#b1)"/><path d="M716 522 Q716 500 732 498 L765 497" stroke="#1c3628" stroke-width="3" fill="none" filter="url(#b1)"/><rect x="836" y="461" width="64" height="130" fill="url(#door)"/><rect x="836" y="461" width="26" height="130" fill="#0e1c14" opacity=".6" filter="url(#b2)"/><rect x="883" y="461" width="5" height="52" fill="#8ca684" filter="url(#b1)"/><rect x="899" y="461" width="85" height="75" fill="#f6ece2"/><path d="M899 520 L925 516 L925 536 L899 536Z" fill="#b8a896" filter="url(#b1)"/><rect x="925" y="461" width="19" height="72" fill="#7a604c" filter="url(#b1)"/><rect x="930" y="461" width="9" height="72" fill="#94806a" filter="url(#b1)"/><rect x="955" y="461" width="30" height="62" fill="#9a8672"/><path d="M957 470 h26 M957 480 h26 M957 490 h26 M957 500 h26 M957 510 h26" stroke="#c4b29c" stroke-width="2.500" stroke-dasharray="3 3" opacity=".7"/><rect x="966" y="523" width="18" height="56" fill="#c4aa8e"/><rect x="975" y="548" width="10" height="28" fill="#14201e" filter="url(#b1)"/><path d="M876 536 Q905 530 938 529 Q950 520 962 523 Q969 528 968 545 L964 600 L940 640 L876 600 Z" fill="url(#lchair)" filter="url(#b1)"/><path d="M880 536 Q910 531 940 529" stroke="#94583a" stroke-width="2" fill="none" filter="url(#b1)"/><path d="M908 545 L910 590 M928 540 L934 600 M946 532 L942 600" stroke="#2e140a" stroke-width="2" filter="url(#b1)" opacity=".8"/><path d="M961.500 532 L952 581" stroke="#ececec" stroke-width="2.800" filter="url(#b1)"/><rect x="944" y="576" width="41" height="90" fill="#26341a"/><g filter="url(#b1)"><path d="M950 475 Q954 465 964 461 L968 461 Q958 472 953 490 Z" fill="#9aba3c"/><path d="M968 488 Q974 474 983 468 L983 476 Q975 486 970 496Z" fill="#3e5c1e"/><path d="M974 520 Q976 500 983 494 L983 528 Q978 530 974 520Z" fill="#a4c048"/><path d="M951 485 Q953 500 951 510" stroke="#4a6420" stroke-width="2.500" fill="none"/><path d="M945 600 Q955 582 984 574 L984 584 Q962 592 950 612Z" fill="#8cb83a"/><path d="M958 600 Q972 592 984 596 L984 612 Q970 606 958 606Z" fill="#b4d458"/><path d="M953 612 Q966 610 984 622 L984 640 Q968 624 953 618Z" fill="#86ac30"/><path d="M962 632 Q972 634 984 650 L984 662 L975 662 Q970 645 962 632Z" fill="#9cc040"/><path d="M948 600 Q950 630 958 662" stroke="#52741e" stroke-width="3" fill="none"/></g></g><path d="M701.9 661 L702.5 636.4 Q704 628 706.8 621 Q710 613 715.6 608 Q722 603 728.7 599.3 Q737 596.5 746 595 Q754 591 761.4 588.4 L777.8 588.4 L786.5 584 Q777 577 772 567 Q768 559 768.300 552.800 Q770 548 774.500 550.500 Q772 542 770 532 Q765 516 765.500 505 Q767 490 775 481.500 Q782 474 789.200 470.900 Q798 467.500 808.200 467.200 Q818 467 827.200 469 Q838 472.500 846.200 479.500 Q853 486 858 494.600 Q864 506 867.500 516 Q871 526 873 535 Q875.500 544 875.500 551.600 Q874.500 560 874.500 568.200 L875 579 L893.700 580.200 Q904 580.500 912.600 582.800 Q921 586 926.900 591.900 L941.100 610.900 L955.400 629.900 Q962 639 966 646.500 Q968 653 968.400 661 Z" fill="none" stroke="#e4ff00" stroke-width="17.4" stroke-linejoin="round"/><path d="M701.9 661 L702.5 636.4 Q704 628 706.8 621 Q710 613 715.6 608 Q722 603 728.7 599.3 Q737 596.5 746 595 Q754 591 761.4 588.4 L777.8 588.4 L786.5 584 Q777 577 772 567 Q768 559 768.300 552.800 Q770 548 774.500 550.500 Q772 542 770 532 Q765 516 765.500 505 Q767 490 775 481.500 Q782 474 789.200 470.900 Q798 467.500 808.200 467.200 Q818 467 827.200 469 Q838 472.500 846.200 479.500 Q853 486 858 494.600 Q864 506 867.500 516 Q871 526 873 535 Q875.500 544 875.500 551.600 Q874.500 560 874.500 568.200 L875 579 L893.700 580.200 Q904 580.500 912.600 582.800 Q921 586 926.900 591.900 L941.100 610.900 L955.400 629.900 Q962 639 966 646.500 Q968 653 968.400 661" fill="none" stroke="#ff1400" stroke-width="8.6" stroke-linejoin="round"/><g clip-path="url(#sc)"><rect x="694" y="461" width="290" height="205" fill="url(#shirt)"/><g filter="url(#b2)"><path d="M702 662 Q712 618 750 600 L785 592 L795 640 L760 662Z" fill="#7c6c56"/><path d="M880 584 Q925 588 965 662 L905 662 L880 610 Z" fill="#544a3e"/><path d="M860 640 L905 662 L840 662Z" fill="#7c6c56"/></g><g filter="url(#b1)" opacity=".85"><path d="M750 598 Q775 625 785 662" stroke="#463c30" stroke-width="3.500" fill="none"/><path d="M765 594 Q792 625 800 662" stroke="#4a4034" stroke-width="3" fill="none"/><path d="M715 632 Q740 640 758 662" stroke="#50463a" stroke-width="2.500" fill="none"/><path d="M893 625 L890 662 M901 620 L903 662" stroke="#3c342a" stroke-width="2.500" fill="none"/></g><path d="M786 575 L791 596 Q806 618 827 626 Q850 626 876 611 L876 570 Z" fill="#b86e3e"/><path d="M796 584 Q812 606 846 616 L874 612 L874 600 Q850 612 820 598Z" fill="#8a4a22" filter="url(#b2)"/><path d="M789 596 Q806 624 828 630 Q852 630 878 614" stroke="#5a4e3e" stroke-width="7" fill="none" filter="url(#b1)"/><path d="M768 552 Q764 500 780 478 Q800 462 830 468 Q860 482 870 520 Q877 548 875 580 L874 600 Q868 612 850 613.500 Q830 612 812 602 Q798 592 790 580 Z" fill="url(#skin)"/><path d="M862 505 Q874 530 876 580 L872 604 Q864 580 864 552 Q858 530 862 505Z" fill="#8a4a26" opacity=".45" filter="url(#b2)"/><path d="M764 550 Q758 500 776 478 Q796 458 830 466 Q850 474 859 492 Q838 486 820 494 Q802 504 796 524 Q790 540 790 556 Q784 548 776 550 Z" fill="#4e2c18" filter="url(#b2)"/><path d="M766 540 Q760 500 778 480 Q798 464 826 467 Q800 476 788 500 Q780 520 780 548 Z" fill="#2c160a" opacity=".75" filter="url(#b2)"/><path d="M764 550 Q758 500 776 478 Q796 458 830 466 Q850 474 859 492 Q838 486 820 494 Q802 504 796 524 Q790 540 790 556 Q784 548 776 550 Z" fill="#000" filter="url(#grain)" opacity=".9"/><path d="M770 553 Q774 548 781 552 Q790 560 792 582 Q786 586 780 577 Q772 566 770 553Z" fill="#cc8450"/><path d="M775 557 Q782 563 784 577" stroke="#7a3e20" stroke-width="2" fill="none" filter="url(#b1)"/><path d="M778 562 Q781 567 782 573" stroke="#f0c8a0" stroke-width="1.500" fill="none" filter="url(#b1)"/><ellipse cx="822" cy="513" rx="18" ry="11" fill="#eaa976" opacity=".8" filter="url(#b3)"/><ellipse cx="814" cy="566" rx="13" ry="10" fill="#e09a64" opacity=".6" filter="url(#b3)"/><g filter="url(#b1)"><path d="M805 541.500 Q820 536 837 540 L845 535.500" stroke="#2e1408" stroke-width="2.800" fill="none"/><path d="M851 531 Q860 524 869.500 521" stroke="#2e1408" stroke-width="2.800" fill="none"/><path d="M813 550.500 Q824 543.500 835 548 Q826 553.500 813 550.500Z" fill="#24100a"/><circle cx="826" cy="548.500" r="2.300" fill="#0e0604"/><path d="M855 536.500 Q862 531.500 870 534 Q862 539 855 536.500Z" fill="#24100a"/><path d="M846 541 Q843 556 844 565" stroke="#9a5830" stroke-width="2.500" fill="none" opacity=".8"/><ellipse cx="846" cy="568.500" rx="4" ry="1.700" fill="#3a1a0c"/><ellipse cx="853" cy="559" rx="4" ry="6" fill="#f0b488" opacity=".7" filter="url(#b1)"/><path d="M808 546 Q822 540 838 545 Q826 549 812 552Z" fill="#9a5428" opacity=".5"/><path d="M852 536 Q862 529 871 531 L870 538 Q860 539 852 536Z" fill="#8a4822" opacity=".5"/><path d="M856 566 Q862 572 858 578" stroke="#9a5830" stroke-width="2" fill="none" opacity=".6"/><path d="M840 589 Q852 579 871 578 Q860 584.500 841 590Z" fill="#5a2a18"/><path d="M843 590 Q858 585 870 582.500 Q868 590.500 857 593 Q848 593.500 843 590Z" fill="#bd7868"/><path d="M848 597 Q858 598 866 594" stroke="#8a4a2a" stroke-width="2" fill="none" opacity=".5"/><path d="M848 575 Q858 571.500 868 573" stroke="#6a3a22" stroke-width="1.800" fill="none" opacity=".6"/><path d="M793 581 Q812 604 848 613.500 Q862 613 872 603" stroke="#7a3e1e" stroke-width="2.500" fill="none" opacity=".55"/></g></g></svg><div id="dlg" class="a" style="left:34px;top:137px;width:427px;height:325px"><span class="a" style="left:4.5px;top:4.5px;font-size:7.5px;color:#d8dde2;letter-spacing:-0.1px">Layer Style</span><div class="a" style="left:392px;top:0.5px;width:32px;height:12px;border-radius:0 0 3px 3px;background:linear-gradient(#e8a090,#c8402c 45%,#a82818 55%,#d06040);border:1px solid #4a2020;border-top:0"><svg width="30" height="11" style="position:absolute;left:0;top:0"><path d="M12.500 2.500 l5 5 M17.500 2.500 l-5 5" stroke="#fff" stroke-width="1.800"/></svg></div><div id="dbody" class="a" style="left:4px;top:18px;width:419px;height:303px"><div class="a" style="left:7px;top:9px;width:98px;height:283px;border:1px solid #b4b4b4;background:#ececec"></div><div class="a" style="left:8px;top:10.2px;width:96px;height:14.7px;border-bottom:1px solid #fafafa;box-shadow:0 -1px 0 #d8d8d8 inset"></div><span class="a dt" style="left:12px;top:13.2px">Styles</span><div class="a" style="left:8px;top:25.7px;width:96px;height:14.7px;border-bottom:1px solid #fafafa;box-shadow:0 -1px 0 #d8d8d8 inset"></div><span class="a dt" style="left:12px;top:28.7px">Blending Options: Default</span><div class="a" style="left:8px;top:40.4px;width:96px;height:14.7px;border-bottom:1px solid #fafafa;box-shadow:0 -1px 0 #d8d8d8 inset"></div><div class="a" style="left:11.5px;top:43.7px;width:7px;height:7px;border:1px solid #a4a6a8;background:#f6f6f6"></div><span class="a dt" style="left:22px;top:43.4px;">Bevel &amp; Emboss</span><div class="a" style="left:8px;top:55.1px;width:96px;height:14.7px;border-bottom:1px solid #fafafa;box-shadow:0 -1px 0 #d8d8d8 inset"></div><div class="a" style="left:20.5px;top:58.4px;width:7px;height:7px;border:1px solid #a4a6a8;background:#f6f6f6"></div><span class="a dt" style="left:31px;top:58.1px;">Contour</span><div class="a" style="left:8px;top:69.7px;width:96px;height:14.7px;border-bottom:1px solid #fafafa;box-shadow:0 -1px 0 #d8d8d8 inset"></div><div class="a" style="left:20.5px;top:73.0px;width:7px;height:7px;border:1px solid #a4a6a8;background:#f6f6f6"></div><span class="a dt" style="left:31px;top:72.7px;">Texture</span><div class="a" style="left:8px;top:84.4px;width:96px;height:14.7px;background:#3399ff;border-bottom:1px solid #3399ff;box-shadow:0 -1px 0 #3399ff inset"></div><div class="a" style="left:11.5px;top:87.7px;width:7px;height:7px;border:1px solid #a4a6a8;background:#f6f6f6"><svg width="6" height="6" style="position:absolute;left:0;top:0"><path d="M1 3 l1.500 2 l2.500 -4.500" stroke="#224" stroke-width="1" fill="none"/></svg></div><span class="a dt" style="left:22px;top:87.4px;color:#223">Stroke</span><div class="a" style="left:8px;top:99.1px;width:96px;height:14.7px;border-bottom:1px solid #fafafa;box-shadow:0 -1px 0 #d8d8d8 inset"></div><div class="a" style="left:11.5px;top:102.4px;width:7px;height:7px;border:1px solid #a4a6a8;background:#f6f6f6"></div><span class="a dt" style="left:22px;top:102.1px;">Inner Shadow</span><div class="a" style="left:8px;top:113.7px;width:96px;height:14.7px;border-bottom:1px solid #fafafa;box-shadow:0 -1px 0 #d8d8d8 inset"></div><div class="a" style="left:11.5px;top:117.0px;width:7px;height:7px;border:1px solid #a4a6a8;background:#f6f6f6"></div><span class="a dt" style="left:22px;top:116.7px;">Inner Glow</span><div class="a" style="left:8px;top:128.4px;width:96px;height:14.7px;border-bottom:1px solid #fafafa;box-shadow:0 -1px 0 #d8d8d8 inset"></div><div class="a" style="left:11.5px;top:131.7px;width:7px;height:7px;border:1px solid #a4a6a8;background:#f6f6f6"></div><span class="a dt" style="left:22px;top:131.4px;">Satin</span><div class="a" style="left:8px;top:143.1px;width:96px;height:14.7px;border-bottom:1px solid #fafafa;box-shadow:0 -1px 0 #d8d8d8 inset"></div><div class="a" style="left:11.5px;top:146.4px;width:7px;height:7px;border:1px solid #a4a6a8;background:#f6f6f6"></div><span class="a dt" style="left:22px;top:146.1px;">Color Overlay</span><div class="a" style="left:8px;top:157.8px;width:96px;height:14.7px;border-bottom:1px solid #fafafa;box-shadow:0 -1px 0 #d8d8d8 inset"></div><div class="a" style="left:11.5px;top:161.1px;width:7px;height:7px;border:1px solid #a4a6a8;background:#f6f6f6"></div><span class="a dt" style="left:22px;top:160.8px;">Gradient Overlay</span><div class="a" style="left:8px;top:172.4px;width:96px;height:14.7px;border-bottom:1px solid #fafafa;box-shadow:0 -1px 0 #d8d8d8 inset"></div><div class="a" style="left:11.5px;top:175.7px;width:7px;height:7px;border:1px solid #a4a6a8;background:#f6f6f6"></div><span class="a dt" style="left:22px;top:175.4px;">Pattern Overlay</span><div class="a" style="left:8px;top:187.1px;width:96px;height:14.7px;border-bottom:1px solid #fafafa;box-shadow:0 -1px 0 #d8d8d8 inset"></div><div class="a" style="left:11.5px;top:190.4px;width:7px;height:7px;border:1px solid #a4a6a8;background:#f6f6f6"></div><span class="a dt" style="left:22px;top:190.1px;">Outer Glow</span><div class="a" style="left:8px;top:201.8px;width:96px;height:14.7px;border-bottom:1px solid #fafafa;box-shadow:0 -1px 0 #d8d8d8 inset"></div><div class="a" style="left:11.5px;top:205.1px;width:7px;height:7px;border:1px solid #a4a6a8;background:#f6f6f6"></div><span class="a dt" style="left:22px;top:204.8px;">Drop Shadow</span><div class="a grp" style="left:115px;top:12px;width:226px;height:281px"></div><span class="a dt gl" style="left:129px;top:7.5px">Stroke</span><div class="a grp" style="left:122px;top:21.5px;width:212px;height:74px"></div><span class="a dt gl" style="left:136px;top:17px">Structure</span><span class="a dt" style="right:246px;top:30.2px">Size:</span><span class="a dt" style="right:246px;top:46.2px">Position:</span><span class="a dt" style="right:246px;top:63.7px">Blend Mode:</span><span class="a dt" style="right:246px;top:79.7px">Opacity:</span><div class="a" style="left:179px;top:30.5px;width:66px;height:2.500px;background:#b0b0b0;border-top:1px solid #8a8a8a;border-radius:1px"></div><svg class="a" style="left:183px;top:31.5px" width="8" height="7"><path d="M4 0.500 l3 3 v2.500 h-6 v-2.500z" fill="#e8e8e8" stroke="#777" stroke-width=".8"/></svg><div class="a" style="left:179px;top:80.0px;width:66px;height:2.500px;background:#b0b0b0;border-top:1px solid #8a8a8a;border-radius:1px"></div><svg class="a" style="left:240px;top:81.0px" width="8" height="7"><path d="M4 0.500 l3 3 v2.500 h-6 v-2.500z" fill="#e8e8e8" stroke="#777" stroke-width=".8"/></svg><div class="a" style="left:251px;top:29px;width:36px;height:11px;background:#fff;border:1px solid #c4c8cc"><span class="dt" style="position:absolute;left:3px;top:1.500px;color:#223">12</span></div><span class="a dt" style="left:289px;top:30.5px">px</span><div class="a" style="left:251px;top:78.5px;width:36px;height:11px;background:#fff;border:1px solid #c4c8cc"><span class="dt" style="position:absolute;left:3px;top:1.500px;color:#223">100</span></div><span class="a dt" style="left:289px;top:80px">%</span><div class="a" style="left:177px;top:44px;width:43px;height:14px;background:#fff;border:1px solid #dcdcdc;border-radius:1px"><span class="dt" style="position:absolute;left:2.500px;top:3px;color:#223">Outside</span><i style="position:absolute;right:2.500px;top:5.500px;border:2.200px solid transparent;border-bottom:0;border-top:2.500px solid #111"></i></div><div class="a" style="left:177px;top:61px;width:80px;height:14px;background:#fff;border:1px solid #dcdcdc;border-radius:1px"><span class="dt" style="position:absolute;left:2.500px;top:3px;color:#223">Normal</span><i style="position:absolute;right:2.500px;top:5.500px;border:2.200px solid transparent;border-bottom:0;border-top:2.500px solid #111"></i></div><div class="a grp" style="left:122px;top:105.5px;width:211px;height:88px"></div><span class="a dt" style="left:135px;top:103px;background:#ececec;padding:0 2px 0 3px">Fill Type:</span><div class="a" style="left:168px;top:100px;width:47px;height:15px;background:#fff;border:1px solid #dcdcdc;border-radius:1px"><span class="dt" style="position:absolute;left:2.500px;top:3px;color:#223">Color</span><i style="position:absolute;right:2.500px;top:5.500px;border:2.200px solid transparent;border-bottom:0;border-top:2.500px solid #111"></i></div><span class="a dt" style="left:129px;top:122.5px">Color:</span><div class="a" style="left:151px;top:122px;width:28px;height:10px;background:#e4fb05;border:1px solid #b8c840"></div><div class="a" style="left:165px;top:199px;width:56px;height:13px;border:1px solid #707070;border-radius:2px;box-shadow:inset 0 0 0 1px #fcfcfc;background:linear-gradient(#f4f4f4 0%,#ebebeb 48%,#dddddd 52%,#cfcfcf 100%);text-align:center;font-size:5.8px;line-height:11px;color:#223;letter-spacing:-0.1px">Make Default</div><div class="a" style="left:227px;top:199px;width:66px;height:13px;border:1px solid #707070;border-radius:2px;box-shadow:inset 0 0 0 1px #fcfcfc;background:linear-gradient(#f4f4f4 0%,#ebebeb 48%,#dddddd 52%,#cfcfcf 100%);text-align:center;font-size:5.8px;line-height:11px;color:#223;letter-spacing:-0.1px">Reset to Default</div><div class="a" style="left:352px;top:10px;width:60px;height:12px;border:1px solid #3c7fb1;border-radius:2px;box-shadow:inset 0 0 0 1px #48d8fb;background:linear-gradient(#f4f4f4 0%,#ebebeb 48%,#dddddd 52%,#cfcfcf 100%);text-align:center;font-size:7.5px;line-height:10px;color:#223;letter-spacing:-0.1px">OK</div><div class="a" style="left:352px;top:28px;width:60px;height:12.5px;border:1px solid #707070;border-radius:2px;box-shadow:inset 0 0 0 1px #fcfcfc;background:linear-gradient(#f4f4f4 0%,#ebebeb 48%,#dddddd 52%,#cfcfcf 100%);text-align:center;font-size:7.5px;line-height:10.5px;color:#223;letter-spacing:-0.1px">Cancel</div><div class="a" style="left:352px;top:47px;width:60px;height:12.5px;border:1px solid #707070;border-radius:2px;box-shadow:inset 0 0 0 1px #fcfcfc;background:linear-gradient(#f4f4f4 0%,#ebebeb 48%,#dddddd 52%,#cfcfcf 100%);text-align:center;font-size:7.5px;line-height:10.5px;color:#223;letter-spacing:-0.1px">New Style...</div><div class="a" style="left:360px;top:65px;width:7.500px;height:7.500px;border:1px solid #6a7a8a;background:#f4f4f4"><svg width="6" height="6" style="position:absolute;left:0;top:0"><path d="M1 3 l1.500 2 l2.500 -4.500" stroke="#224" stroke-width="1" fill="none"/></svg></div><span class="a" style="left:370px;top:64.5px;font-size:7.500px;color:#223">Preview</span><div class="a" style="left:359px;top:79px;width:44px;height:43px;background:#d2d2d2;border:1px solid #c0c0c0"></div><div class="a" style="left:363px;top:83px;width:36px;height:36px;background:#e6fd06;border-radius:7px"></div><div class="a" style="left:370.5px;top:90.5px;width:21px;height:21px;background:#5b5b5d"></div></div></div></div>

<div class="a" style="left:1637px;top:82px;width:16px;height:951px;background:linear-gradient(90deg,#3a3a3a,#484848)"></div><div class="a" style="left:1637px;top:1033px;width:16px;height:16px;background:#535353"></div>
<div class="a" style="left:1653px;top:63px;width:3px;height:986px;background:#2c2c2c;border-right:1px solid #3a3a3a"></div>
<div class="a" style="left:1656px;top:63px;width:264px;height:12px;background:#3a3a3a"></div>
<div id="dock" class="a" style="left:1656px;top:75px;width:38px;height:974px;background:#535353"><svg class="a" style="left:0;top:0" width="38" height="974" viewBox="0 75 38 974"><rect x="0" y="75" width="38" height="1" fill="#656565"/><rect x="9" y="79" width="1" height="3" fill="#303030" shape-rendering="crispEdges"/><rect x="11" y="79" width="1" height="3" fill="#303030" shape-rendering="crispEdges"/><rect x="13" y="79" width="1" height="3" fill="#303030" shape-rendering="crispEdges"/><rect x="15" y="79" width="1" height="3" fill="#303030" shape-rendering="crispEdges"/><rect x="17" y="79" width="1" height="3" fill="#303030" shape-rendering="crispEdges"/><rect x="19" y="79" width="1" height="3" fill="#303030" shape-rendering="crispEdges"/><rect x="21" y="79" width="1" height="3" fill="#303030" shape-rendering="crispEdges"/><rect x="23" y="79" width="1" height="3" fill="#303030" shape-rendering="crispEdges"/><rect x="25" y="79" width="1" height="3" fill="#303030" shape-rendering="crispEdges"/><rect x="27" y="79" width="1" height="3" fill="#303030" shape-rendering="crispEdges"/><rect x="0" y="115" width="38" height="1" fill="#2a2a2a"/><rect x="0" y="116" width="38" height="1" fill="#626262"/><rect x="9" y="119" width="1" height="3" fill="#303030" shape-rendering="crispEdges"/><rect x="11" y="119" width="1" height="3" fill="#303030" shape-rendering="crispEdges"/><rect x="13" y="119" width="1" height="3" fill="#303030" shape-rendering="crispEdges"/><rect x="15" y="119" width="1" height="3" fill="#303030" shape-rendering="crispEdges"/><rect x="17" y="119" width="1" height="3" fill="#303030" shape-rendering="crispEdges"/><rect x="19" y="119" width="1" height="3" fill="#303030" shape-rendering="crispEdges"/><rect x="21" y="119" width="1" height="3" fill="#303030" shape-rendering="crispEdges"/><rect x="23" y="119" width="1" height="3" fill="#303030" shape-rendering="crispEdges"/><rect x="25" y="119" width="1" height="3" fill="#303030" shape-rendering="crispEdges"/><rect x="27" y="119" width="1" height="3" fill="#303030" shape-rendering="crispEdges"/><rect x="0" y="184" width="38" height="1" fill="#2a2a2a"/><rect x="0" y="185" width="38" height="1" fill="#626262"/><rect x="9" y="188" width="1" height="3" fill="#303030" shape-rendering="crispEdges"/><rect x="11" y="188" width="1" height="3" fill="#303030" shape-rendering="crispEdges"/><rect x="13" y="188" width="1" height="3" fill="#303030" shape-rendering="crispEdges"/><rect x="15" y="188" width="1" height="3" fill="#303030" shape-rendering="crispEdges"/><rect x="17" y="188" width="1" height="3" fill="#303030" shape-rendering="crispEdges"/><rect x="19" y="188" width="1" height="3" fill="#303030" shape-rendering="crispEdges"/><rect x="21" y="188" width="1" height="3" fill="#303030" shape-rendering="crispEdges"/><rect x="23" y="188" width="1" height="3" fill="#303030" shape-rendering="crispEdges"/><rect x="25" y="188" width="1" height="3" fill="#303030" shape-rendering="crispEdges"/><rect x="27" y="188" width="1" height="3" fill="#303030" shape-rendering="crispEdges"/><rect x="0" y="225" width="38" height="1" fill="#2a2a2a"/><rect x="0" y="226" width="38" height="1" fill="#626262"/><rect x="9" y="229" width="1" height="3" fill="#303030" shape-rendering="crispEdges"/><rect x="11" y="229" width="1" height="3" fill="#303030" shape-rendering="crispEdges"/><rect x="13" y="229" width="1" height="3" fill="#303030" shape-rendering="crispEdges"/><rect x="15" y="229" width="1" height="3" fill="#303030" shape-rendering="crispEdges"/><rect x="17" y="229" width="1" height="3" fill="#303030" shape-rendering="crispEdges"/><rect x="19" y="229" width="1" height="3" fill="#303030" shape-rendering="crispEdges"/><rect x="21" y="229" width="1" height="3" fill="#303030" shape-rendering="crispEdges"/><rect x="23" y="229" width="1" height="3" fill="#303030" shape-rendering="crispEdges"/><rect x="25" y="229" width="1" height="3" fill="#303030" shape-rendering="crispEdges"/><rect x="27" y="229" width="1" height="3" fill="#303030" shape-rendering="crispEdges"/><rect x="0" y="294" width="38" height="1" fill="#2a2a2a"/><rect x="0" y="295" width="38" height="1" fill="#626262"/><rect x="9" y="298" width="1" height="3" fill="#303030" shape-rendering="crispEdges"/><rect x="11" y="298" width="1" height="3" fill="#303030" shape-rendering="crispEdges"/><rect x="13" y="298" width="1" height="3" fill="#303030" shape-rendering="crispEdges"/><rect x="15" y="298" width="1" height="3" fill="#303030" shape-rendering="crispEdges"/><rect x="17" y="298" width="1" height="3" fill="#303030" shape-rendering="crispEdges"/><rect x="19" y="298" width="1" height="3" fill="#303030" shape-rendering="crispEdges"/><rect x="21" y="298" width="1" height="3" fill="#303030" shape-rendering="crispEdges"/><rect x="23" y="298" width="1" height="3" fill="#303030" shape-rendering="crispEdges"/><rect x="25" y="298" width="1" height="3" fill="#303030" shape-rendering="crispEdges"/><rect x="27" y="298" width="1" height="3" fill="#303030" shape-rendering="crispEdges"/><rect x="0" y="336" width="38" height="1" fill="#2a2a2a"/><rect x="0" y="337" width="38" height="1" fill="#626262"/><rect x="9" y="340" width="1" height="3" fill="#303030" shape-rendering="crispEdges"/><rect x="11" y="340" width="1" height="3" fill="#303030" shape-rendering="crispEdges"/><rect x="13" y="340" width="1" height="3" fill="#303030" shape-rendering="crispEdges"/><rect x="15" y="340" width="1" height="3" fill="#303030" shape-rendering="crispEdges"/><rect x="17" y="340" width="1" height="3" fill="#303030" shape-rendering="crispEdges"/><rect x="19" y="340" width="1" height="3" fill="#303030" shape-rendering="crispEdges"/><rect x="21" y="340" width="1" height="3" fill="#303030" shape-rendering="crispEdges"/><rect x="23" y="340" width="1" height="3" fill="#303030" shape-rendering="crispEdges"/><rect x="25" y="340" width="1" height="3" fill="#303030" shape-rendering="crispEdges"/><rect x="27" y="340" width="1" height="3" fill="#303030" shape-rendering="crispEdges"/><rect x="0" y="376" width="38" height="1" fill="#2a2a2a"/><rect x="0" y="377" width="38" height="1" fill="#626262"/><rect x="9" y="380" width="1" height="3" fill="#303030" shape-rendering="crispEdges"/><rect x="11" y="380" width="1" height="3" fill="#303030" shape-rendering="crispEdges"/><rect x="13" y="380" width="1" height="3" fill="#303030" shape-rendering="crispEdges"/><rect x="15" y="380" width="1" height="3" fill="#303030" shape-rendering="crispEdges"/><rect x="17" y="380" width="1" height="3" fill="#303030" shape-rendering="crispEdges"/><rect x="19" y="380" width="1" height="3" fill="#303030" shape-rendering="crispEdges"/><rect x="21" y="380" width="1" height="3" fill="#303030" shape-rendering="crispEdges"/><rect x="23" y="380" width="1" height="3" fill="#303030" shape-rendering="crispEdges"/><rect x="25" y="380" width="1" height="3" fill="#303030" shape-rendering="crispEdges"/><rect x="27" y="380" width="1" height="3" fill="#303030" shape-rendering="crispEdges"/><rect x="0" y="417" width="38" height="1" fill="#2a2a2a"/><rect x="0" y="418" width="38" height="1" fill="#626262"/><g fill="none" stroke="#c4c4c4" stroke-width="1.200"><rect x="13.500" y="90.500" width="5" height="5"/><rect x="13.500" y="96.500" width="5" height="5"/></g><rect x="13" y="102.500" width="6" height="5.500" fill="#c4c4c4"/><rect x="15.300" y="92.300" width="1.500" height="1.500" fill="#c4c4c4"/><rect x="15.300" y="98.300" width="1.500" height="1.500" fill="#c4c4c4"/><path d="M21.500 90 h6 M22 91.500 c6 1 7 9 1.500 14.500 c3 -5.500 2.500 -9 -1 -11 l-1.500 2.500 z" fill="#c4c4c4" stroke="#c4c4c4" stroke-width="1"/><path d="M15.500 139 h8 v8 h-8z" fill="#c4c4c4"/><path d="M14 133 c0 -2 1.500 -3 2.500 -1 l1.500 6 h-1.500z M19 131 h1.500 l0.500 7 h-2z M21.500 138 l1.500 -4.500 c1.500 -2 3.500 -1 3 0.500 c-0.500 1 -2 1.500 -2.500 2.500 l-0.800 1.700z" fill="#c4c4c4"/><path d="M13 160 c3 -1.500 6.500 -1 8.500 1.500 c-3 2 -6.500 1.500 -8.500 -1.500z" fill="#c4c4c4"/><rect x="21" y="161" width="7.500" height="1.600" fill="#c4c4c4"/><rect x="13" y="169.500" width="9" height="1.600" fill="#c4c4c4"/><path d="M21.500 170.300 l6.500 -5 c2 2.500 2 6.500 0 9.500z" fill="#c4c4c4"/><circle cx="19.500" cy="209" r="8.200" fill="#c4c4c4"/><rect x="18.300" y="207.500" width="2.600" height="6" fill="#535353"/><rect x="17.300" y="207.500" width="2" height="1.200" fill="#535353"/><circle cx="19.600" cy="204.700" r="1.500" fill="#535353"/><rect x="17.300" y="212.700" width="4.600" height="1.200" fill="#535353"/><text x="17" y="256" font-family="Liberation Sans,sans-serif" font-size="17" text-anchor="middle" fill="#c4c4c4">A</text><rect x="24.500" y="241" width="1.200" height="16" fill="#c4c4c4"/><path d="M17.500 270.500 h6 v1.500 h-1 v13.500 h-1.500 v-13.500 h-1.500 v13.500 h-1.600 v-7.500 a3.800 3.800 0 0 1 -0.400 -7.500z" fill="#c4c4c4"/><path d="M19 309.500 l7 3.200 l-7 3.500 l-7 -3.500z" fill="#d6d6d6"/><path d="M11.500 313.500 l7 3.500 v8.500 l-7 -3.800z" fill="#a8a8a8"/><path d="M26.500 313.500 l-7 3.500 v8.500 l7 -3.800z" fill="#c2c2c2"/><path d="M16 350.500 l4 1.800 l-4 2 l-4 -2z" fill="#d6d6d6"/><path d="M11.500 353 l4 2 v5 l-4 -2.200z M20.500 353 l-4 2 v5 l4 -2.200z" fill="none" stroke="#c4c4c4" stroke-width="1"/><rect x="22.500" y="351" width="5" height="3" fill="#c4c4c4"/><rect x="22.500" y="356" width="5" height="3" fill="#c4c4c4"/><rect x="11.500" y="362.500" width="16" height="1.300" fill="#c4c4c4"/><rect x="11.500" y="365" width="16" height="3" fill="#888"/><path d="M23 365.500 h4 l-2 2.200z" fill="#222"/><path d="M12.500 392.500 l15.500 7.500 l-15.500 7.500z" fill="#c4c4c4"/></svg></div>
<div class="a" style="left:1694px;top:75px;width:2px;height:974px;background:#2e2e2e"></div>
<div id="panels" class="a" style="left:1696px;top:75px;width:224px;height:974px;background:#535353"><div class="ptabs" style="top:0"><div class="pt on" style="left:0;width:40px"><span style="left:7px">Color</span></div><div class="pt" style="left:41px;width:57px"><span style="left:6px">Swatches</span></div><i class="pm"></i></div><div class="a" style="left:16px;top:37px;width:19px;height:19px;background:#1d1311;border:1px solid #fff;outline:1px solid #3a3a3a"></div><div class="a" style="left:5px;top:26px;width:20px;height:20px;border:1px solid #8a8a8a"><div style="width:18px;height:18px;background:#000;border:1px solid #fff"></div></div><span class="a b" style="left:43px;top:27px">R</span><div class="a" style="left:58px;top:26px;width:85px;height:6px;border:1px solid #8f8f8f;border-bottom-color:#777;background:linear-gradient(90deg,#000,#ff0000)"></div><svg class="a" style="left:53px;top:33px" width="11" height="9"><path d="M5.500 0.500 l4.500 4 v3.500 h-9 v-3.500z" fill="#a9a9a9" stroke="#6c6c6c" stroke-width="1"/><path d="M5.500 1.500 l3.500 3.200 h-7z" fill="#c9c9c9"/></svg><div class="a vb" style="left:149px;top:25px;width:46px;height:18px"><span style="left:5px">0</span></div><span class="a b" style="left:43px;top:51px">G</span><div class="a" style="left:58px;top:50px;width:85px;height:6px;border:1px solid #8f8f8f;border-bottom-color:#777;background:linear-gradient(90deg,#000,#00ff00)"></div><svg class="a" style="left:53px;top:57px" width="11" height="9"><path d="M5.500 0.500 l4.500 4 v3.500 h-9 v-3.500z" fill="#a9a9a9" stroke="#6c6c6c" stroke-width="1"/><path d="M5.500 1.500 l3.500 3.200 h-7z" fill="#c9c9c9"/></svg><div class="a vb" style="left:149px;top:49px;width:46px;height:18px"><span style="left:5px">0</span></div><span class="a b" style="left:43px;top:75px">B</span><div class="a" style="left:58px;top:74px;width:85px;height:6px;border:1px solid #8f8f8f;border-bottom-color:#777;background:linear-gradient(90deg,#000,#0000ff)"></div><svg class="a" style="left:53px;top:81px" width="11" height="9"><path d="M5.500 0.500 l4.500 4 v3.500 h-9 v-3.500z" fill="#a9a9a9" stroke="#6c6c6c" stroke-width="1"/><path d="M5.500 1.500 l3.500 3.200 h-7z" fill="#c9c9c9"/></svg><div class="a vb" style="left:149px;top:73px;width:46px;height:18px"><span style="left:5px">0</span></div><div class="a" style="left:6px;top:100px;width:190px;height:15px;background:linear-gradient(180deg,rgba(255,255,255,1) 0%,rgba(255,255,255,0) 50%,rgba(0,0,0,0) 50%,rgba(0,0,0,1) 100%),linear-gradient(90deg,#ff0000 0%,#ffff00 16%,#00a040 31%,#00b4ff 50%,#0000c0 65%,#e000c0 79%,#ff0040 90%,#ff0000 100%)"></div><div class="a" style="left:196px;top:100px;width:8px;height:7px;background:#fff"></div><div class="a" style="left:196px;top:107px;width:8px;height:8px;background:#000"></div><div class="a" style="left:0;top:117px;width:224px;height:3px;background:#2e2e2e"></div><div class="ptabs" style="top:120px"><div class="pt on" style="left:0;width:73px"><span style="left:7px">Adjustments</span></div><div class="pt" style="left:74px;width:41px"><span style="left:6px">Styles</span></div><i class="pm"></i></div><span class="a b" style="left:9px;top:142px;font-size:11px">Add an adjustment</span><svg class="a" style="left:0;top:0" width="224" height="260" viewBox="0 0 224 260"><defs><linearGradient id="g1" x1="0" x2="1"><stop offset="0" stop-color="#444"/><stop offset="1" stop-color="#ddd"/></linearGradient><linearGradient id="g2" x1="0" y1="0" x2="0" y2="1"><stop offset="0" stop-color="#ddd"/><stop offset="1" stop-color="#555"/></linearGradient><linearGradient id="g3" x1="0" y1="0" x2="1" y2="1"><stop offset="0" stop-color="#666"/><stop offset=".5" stop-color="#ccc"/><stop offset="1" stop-color="#666"/></linearGradient></defs><circle cx="54" cy="169" r="3.6" fill="none" stroke="#c8c8c8" stroke-width="1.3"/><path d="M54 165.4 a3.6 3.6 0 0 1 0 7.2z" fill="#c8c8c8"/><path d="M59.5 169.0 L62.3 169.0" stroke="#c8c8c8" stroke-width="1.5"/><path d="M57.9 172.9 L59.9 174.9" stroke="#c8c8c8" stroke-width="1.5"/><path d="M54.0 174.5 L54.0 177.3" stroke="#c8c8c8" stroke-width="1.5"/><path d="M50.1 172.9 L48.1 174.9" stroke="#c8c8c8" stroke-width="1.5"/><path d="M48.5 169.0 L45.7 169.0" stroke="#c8c8c8" stroke-width="1.5"/><path d="M50.1 165.1 L48.1 163.1" stroke="#c8c8c8" stroke-width="1.5"/><path d="M54.0 163.5 L54.0 160.7" stroke="#c8c8c8" stroke-width="1.5"/><path d="M57.9 165.1 L59.9 163.1" stroke="#c8c8c8" stroke-width="1.5"/><path d="M70 173.5 v-5 l1.5 -1 l1 2 l1.5 -5 l1.5 4 l1.5 -6 l1.5 5 l1.5 -6 l1.5 5 l1.5 -4 l1.5 3 l1.5 -2 l1.500 1 v9z" fill="#c8c8c8"/><rect x="95.5" y="163.0" width="15" height="12" fill="#5a5a5a" stroke="#c8c8c8" stroke-width="1.2"/><path d="M95 167 h16 M95 171 h16 M100 163 v12 M106 163 v12" stroke="#9a9a9a" stroke-width="1"/><path d="M95.5 175 c8 0 6 -12 15 -12" fill="none" stroke="#e8e8e8" stroke-width="1.300"/><rect x="119.5" y="163.0" width="15" height="12" fill="#5a5a5a" stroke="#c8c8c8" stroke-width="1.2"/><path d="M134.5 163 v12 h-15z" fill="#a8a8a8"/><path d="M121.5 166.5 h4 M123.5 164.5 v4" stroke="#eee" stroke-width="1.200"/><path d="M128.5 172 h4" stroke="#333" stroke-width="1.300"/><path d="M143 162.5 h16 l-8 14.500z" fill="url(#g2)"/><rect x="35.5" y="190.5" width="15" height="12" fill="url(#g1)" stroke="#c8c8c8" stroke-width="1.2"/><rect x="36" y="191.0" width="14" height="4" fill="#aaa"/><path d="M39 191.0 v4 M42 191.0 v4 M45 191.0 v4 M48 191.0 v4" stroke="#666" stroke-width="1.200"/><path d="M61 192 h12 M67 188.5 v4" stroke="#c8c8c8" stroke-width="1.600"/><circle cx="67" cy="191" r="2" fill="#c8c8c8"/><path d="M61.5 192.5 l-3 7 M61.5 192.5 l3 7 M72.5 192.5 l-3 7 M72.5 192.5 l3 7" stroke="#c8c8c8" stroke-width="1"/><path d="M58 199.5 h7 c0 3.500 -7 3.500 -7 0z M69 199.5 h7 c0 3.500 -7 3.500 -7 0z" fill="#c8c8c8"/><rect x="83.5" y="190.5" width="15" height="12" fill="#555" stroke="#c8c8c8" stroke-width="1.2"/><rect x="91" y="190.5" width="7.500" height="12" fill="#d0d0d0"/><rect x="106.5" y="190" width="13" height="9" fill="#b4b4b4"/><rect x="109" y="188" width="5" height="2.500" fill="#b4b4b4"/><circle cx="113" cy="194.5" r="2.800" fill="#666" stroke="#555"/><circle cx="118" cy="199" r="4.800" fill="#8c8c8c" stroke="#c8c8c8" stroke-width="1.300"/><circle cx="139" cy="193" r="4.600" fill="#d6d6d6"/><circle cx="135.5" cy="198.5" r="4.600" fill="#bdbdbd"/><circle cx="142.5" cy="198.5" r="4.600" fill="#a9a9a9"/><path d="M139 196.5 l-2.500 -2 h5z M139 196.5 v4" fill="#444" stroke="#444"/><rect x="155.5" y="190.5" width="15" height="12" fill="#777" stroke="#c8c8c8" stroke-width="1.2"/><path d="M155 194.5 h16 M155 198.5 h16 M160.3 190.5 v12 M165.7 190.5 v12" stroke="#c8c8c8" stroke-width="1.200"/><rect x="47.5" y="217.5" width="15" height="12" fill="#888" stroke="#c8c8c8" stroke-width="1.2"/><ellipse cx="55" cy="223.5" rx="4.500" ry="3" transform="rotate(-30 55 223.5)" fill="#555"/><path d="M48 228.5 l14 -10" stroke="#555" stroke-width="1.300"/><rect x="71.5" y="217.5" width="15" height="12" fill="url(#g3)" stroke="#c8c8c8" stroke-width="1.2"/><path d="M72 228.5 l14 -10" stroke="#6a6a6a" stroke-width="3"/><rect x="95.5" y="217.5" width="15" height="12" fill="#aaa" stroke="#c8c8c8" stroke-width="1.2"/><path d="M96 226.0 h3 v-2.500 h4 v-2.500 h4 v-2.500 h3 v3 h-3 v2.500 h-4 v2.500 h-4 v2.500 h-3z" fill="#4a4a4a"/><rect x="119.5" y="217.5" width="15" height="12" fill="#9a9a9a" stroke="#c8c8c8" stroke-width="1.2"/><path d="M119.5 217.5 l7.500 6 l-7.500 6z M134.5 217.5 l-7.500 6 l7.500 6z" fill="#d4d4d4"/><path d="M119.5 217.5 l15 12 M134.5 217.5 l-15 12" stroke="#666" stroke-width=".8"/><rect x="143.5" y="217.5" width="15" height="12" fill="url(#g1)" stroke="#c8c8c8" stroke-width="1.2"/></svg><div class="a" style="left:0;top:240px;width:224px;height:2px;background:#2e2e2e"></div><div class="a" style="left:209px;top:242px;width:13px;height:19px;background:#3c3c3c"><i style="position:absolute;left:3px;top:5px;width:8px;height:1px;background:#ddd;box-shadow:0 2px 0 #ddd,0 4px 0 #ddd,0 6px 0 #ddd"></i></div><div class="a" style="left:209px;top:266px;width:8px;height:7px;background:linear-gradient(#8a8a8a,#6a6a6a)"></div><div class="a" style="left:209px;top:273px;width:8px;height:9px;background:#3a3a3a"></div><div class="a" style="left:209px;top:287px;width:13px;height:1px;background:#3f3f3f"></div><div class="a" style="left:205px;top:294px;width:14px;height:18px;border:1px solid #383838;border-radius:3px;background:linear-gradient(#686868,#585858)"><i style="position:absolute;left:6px;top:6px;border:2.500px solid transparent;border-bottom:0;border-top:3px solid #e8e8e8"></i></div><div class="a" style="left:205px;top:320px;width:14px;height:18px;border:1px solid #383838;border-radius:3px;background:linear-gradient(#686868,#585858)"><i style="position:absolute;left:6px;top:6px;border:2.500px solid transparent;border-bottom:0;border-top:3px solid #e8e8e8"></i></div><div class="a" style="left:209px;top:315px;width:13px;height:1px;background:#3f3f3f"></div><div class="a" style="left:209px;top:344px;width:13px;height:610px;background:#484848"></div><div class="a" style="left:209px;top:954px;width:13px;height:2px;background:#383838"></div><div class="a" style="left:209px;top:956px;width:13px;height:18px;background:#535353;border-top:1px solid #686868"></div><div class="a" id="layers" style="left:0;top:242px;width:209px;height:732px;overflow:hidden;background:#535353;box-shadow:inset -1px -20px 0 0 #535353, inset -1px 0 0 #3c3c3c"><div class="a" style="left:0;top:0;width:209px;height:28px;border-top:1px solid #636363"></div><div class="dd a" style="left:5px;top:5px;width:110px;height:19px"><span style="left:6px">Normal</span><i class="ud" style="left:99px"></i></div><span class="a lt" style="left:122px;top:7px">Opacity:</span><div class="a vb" style="left:164px;top:4px;width:35px;height:19px"><span style="left:5px;top:3px;font-size:10.5px;letter-spacing:-0.3px">100%</span></div><div class="a ab" style="left:199px;top:4px"></div><div class="a" style="left:0;top:28px;width:209px;height:1px;background:#3f3f3f"></div><div class="a" style="left:0;top:29px;width:209px;height:1px;background:#606060"></div><span class="a lt" style="left:6px;top:36px">Lock:</span><svg class="a" style="left:34px;top:32px" width="90" height="20" viewBox="1730 349 90 20"><g fill="#c6c6c6"><rect x="1735" y="354" width="11" height="11" fill="#8a8a8a"/><rect x="1735" y="354" width="4" height="4"/><rect x="1742" y="354" width="4" height="4"/><rect x="1738.500" y="357.500" width="4" height="4"/><rect x="1735" y="361" width="4" height="4"/><rect x="1742" y="361" width="4" height="4"/><path d="M1770 352 l1.200 1 l-6.500 8.500 l-1.800 -1.500z"/><path d="M1762.500 360.500 l2 1.800 c-1 3 -4.500 3.500 -8.500 2.700 c3 -1 3 -4 6.500 -4.500z"/><path d="M1784.500 351.500 l-2.500 3 h1.800 v3 h-3 v-1.800 l-3 2.500 l3 2.500 v-1.800 h3 v3 h-1.800 l2.500 3 l2.500 -3 h-1.800 v-3 h3 v1.800 l3 -2.500 l-3 -2.500 v1.800 h-3 v-3 h1.800z" fill="none" stroke="#c6c6c6" stroke-width="1"/><rect x="1802" y="358" width="10" height="7.500" rx="1"/><path d="M1804 358 v-2 a3 3 0 0 1 6 0 v2" fill="none" stroke="#c6c6c6" stroke-width="1.600"/><rect x="1806.300" y="360" width="1.500" height="3" fill="#444"/></g></svg><span class="a lt" style="left:144px;top:34px">Fill:</span><div class="a vb" style="left:164px;top:32px;width:35px;height:19px"><span style="left:5px;top:3px;font-size:10.5px;letter-spacing:-0.3px">100%</span></div><div class="a ab" style="left:199px;top:32px"></div><div class="a" style="left:0;top:56px;width:209px;height:2px;background:#444"></div><div class="a" style="left:0;top:58px;width:209px;height:26px;background:#535353;border-bottom:1px solid #424242"><div class="a" style="left:30px;top:0;width:1px;height:26px;background:#434343"></div><div class="a" style="left:31px;top:0;width:178px;height:25px;background:#596679"></div><svg class="a" style="left:9px;top:8px" width="14" height="9" viewBox="0 0 14 9"><path d="M0.500 4.500 c3 -5 10 -5 13 0 c-3 5 -10 5 -13 0z" fill="#5a5a5a" stroke="#b4b4b4" stroke-width="1.200"/><circle cx="7" cy="4.200" r="2.600" fill="#bdbdbd"/><circle cx="7" cy="4.200" r="1.300" fill="#3a3a3a"/><circle cx="6.200" cy="3.300" r=".7" fill="#eee"/></svg><div class="a" style="left:34px;top:3px;width:32.5px;height:20px;border:1px solid #000;background-color:#fff;background-image:linear-gradient(45deg,#ccc 25%,transparent 25%,transparent 75%,#ccc 75%),linear-gradient(45deg,#ccc 25%,transparent 25%,transparent 75%,#ccc 75%);background-size:8px 8px;background-position:0 0,4px 4px"></div><svg class="a" style="left:32px;top:1px" width="37" height="24"><path d="M0.500 6 v-5.500 h10 M26.500 0.500 h10 v5.500 M36.500 18 v5.500 h-10 M10.500 23.500 h-10 v-5.500" fill="none" stroke="#fff" stroke-width="1.400"/></svg><span class="a ln" style="left:76px;top:7px;">stroke layer Edit&gt;Stroke</span></div><div class="a" style="left:0;top:84px;width:209px;height:64px;background:#535353;border-bottom:1px solid #424242"><div class="a" style="left:30px;top:0;width:1px;height:64px;background:#434343"></div><div class="a" style="left:31px;top:0;width:178px;height:63px;background:#535353"></div><svg class="a" style="left:9px;top:8px" width="14" height="9" viewBox="0 0 14 9"><path d="M0.500 4.500 c3 -5 10 -5 13 0 c-3 5 -10 5 -13 0z" fill="#5a5a5a" stroke="#b4b4b4" stroke-width="1.200"/><circle cx="7" cy="4.200" r="2.600" fill="#bdbdbd"/><circle cx="7" cy="4.200" r="1.300" fill="#3a3a3a"/><circle cx="6.200" cy="3.300" r=".7" fill="#eee"/></svg><div class="a" style="left:34px;top:3px;width:32.5px;height:20px;border:1px solid #000;background-color:#fff;background-image:linear-gradient(45deg,#ccc 25%,transparent 25%,transparent 75%,#ccc 75%),linear-gradient(45deg,#ccc 25%,transparent 25%,transparent 75%,#ccc 75%);background-size:8px 8px;background-position:0 0,4px 4px"></div><span class="a ln" style="left:76px;top:7px;">cut out (CTRL+J)</span><span class="a" style="left:182px;top:4px;font-family:'Liberation Serif',serif;font-style:italic;font-size:15px;color:#c4c4c4;letter-spacing:-0.5px">fx</span><div class="a" style="left:198px;top:0;width:11px;height:27px;background:linear-gradient(#9a9a9a,#6a6a6a);border-left:1px solid #606060"><i style="position:absolute;left:2px;top:9px;border:3.500px solid transparent;border-top:0;border-bottom:4px solid #333"></i></div></div><svg class="a" style="left:49px;top:114px" width="14" height="9" viewBox="0 0 14 9"><path d="M0.500 4.500 c3 -5 10 -5 13 0 c-3 5 -10 5 -13 0z" fill="#5a5a5a" stroke="#b4b4b4" stroke-width="1.200"/><circle cx="7" cy="4.200" r="2.600" fill="#bdbdbd"/><circle cx="7" cy="4.200" r="1.300" fill="#3a3a3a"/><circle cx="6.200" cy="3.300" r=".7" fill="#eee"/></svg><span class="a ln" style="left:69px;top:112px">Effects</span><svg class="a" style="left:67px;top:133px" width="14" height="9" viewBox="0 0 14 9"><path d="M0.500 4.500 c3 -5 10 -5 13 0 c-3 5 -10 5 -13 0z" fill="#5a5a5a" stroke="#b4b4b4" stroke-width="1.200"/><circle cx="7" cy="4.200" r="2.600" fill="#bdbdbd"/><circle cx="7" cy="4.200" r="1.300" fill="#3a3a3a"/><circle cx="6.200" cy="3.300" r=".7" fill="#eee"/></svg><span class="a ln" style="left:86px;top:131px">Stroke</span><div class="a" style="left:0;top:148px;width:209px;height:26px;background:#535353;border-bottom:1px solid #424242"><div class="a" style="left:30px;top:0;width:1px;height:26px;background:#434343"></div><div class="a" style="left:31px;top:0;width:178px;height:25px;background:#535353"></div><svg class="a" style="left:9px;top:8px" width="14" height="9" viewBox="0 0 14 9"><path d="M0.500 4.500 c3 -5 10 -5 13 0 c-3 5 -10 5 -13 0z" fill="#5a5a5a" stroke="#b4b4b4" stroke-width="1.200"/><circle cx="7" cy="4.200" r="2.600" fill="#bdbdbd"/><circle cx="7" cy="4.200" r="1.300" fill="#3a3a3a"/><circle cx="6.200" cy="3.300" r=".7" fill="#eee"/></svg><div class="a" style="left:34px;top:3px;width:32.5px;height:20px;border:1px solid #000;background-color:#fff;background-image:linear-gradient(45deg,#ccc 25%,transparent 25%,transparent 75%,#ccc 75%),linear-gradient(45deg,#ccc 25%,transparent 25%,transparent 75%,#ccc 75%);background-size:8px 8px;background-position:0 0,4px 4px"></div><span class="a ln" style="left:76px;top:7px;">selection layer I used pen</span></div><div class="a" style="left:0;top:174px;width:209px;height:26px;background:#535353;border-bottom:1px solid #424242"><div class="a" style="left:30px;top:0;width:1px;height:26px;background:#434343"></div><div class="a" style="left:31px;top:0;width:178px;height:25px;background:#535353"></div><svg class="a" style="left:9px;top:8px" width="14" height="9" viewBox="0 0 14 9"><path d="M0.500 4.500 c3 -5 10 -5 13 0 c-3 5 -10 5 -13 0z" fill="#5a5a5a" stroke="#b4b4b4" stroke-width="1.200"/><circle cx="7" cy="4.200" r="2.600" fill="#bdbdbd"/><circle cx="7" cy="4.200" r="1.300" fill="#3a3a3a"/><circle cx="6.200" cy="3.300" r=".7" fill="#eee"/></svg><div class="a" style="left:34px;top:3px;width:32.5px;height:20px;border:1px solid #000;background:#1d1311"></div><span class="a ln" style="left:76px;top:7px;font-style:italic;">Background</span><svg class="a" style="left:180px;top:6px" width="12" height="14" viewBox="0 0 12 14"><rect x="1" y="6" width="10" height="7" fill="none" stroke="#c8c8c8" stroke-width="1.200"/><path d="M3 6 v-2 a3 3 0 0 1 6 0 v2" fill="none" stroke="#c8c8c8" stroke-width="1.300"/><rect x="5.300" y="8" width="1.500" height="3" fill="#c8c8c8"/></svg></div><i class="a" style="left:48px;top:94px;width:4px;height:4px;background:#d08a58;border-radius:2px 2px 0 0"></i><i class="a" style="left:47px;top:98px;width:5px;height:2px;background:#6a4a30;margin-top:-2px"></i><i class="a" style="left:48px;top:158px;width:4px;height:4px;background:#d08a58;border-radius:2px 2px 0 0"></i><i class="a" style="left:47px;top:162px;width:5px;height:2px;background:#6a4a30;margin-top:-2px"></i><i class="a" style="left:48px;top:184px;width:4px;height:4px;background:#d08a58;border-radius:2px 2px 0 0"></i><i class="a" style="left:47px;top:188px;width:5px;height:2px;background:#6a4a30;margin-top:-2px"></i><div class="a" style="left:0;top:200px;width:209px;height:514px;background:#454545"></div><div class="a" style="left:0;top:708px;width:209px;height:4px;background:#494949"></div><div class="a" style="left:0;top:712px;width:209px;height:2px;background:#383838"></div><div class="a" style="left:0;top:714px;width:209px;height:18px;background:#535353;border-top:1px solid #686868"></div><svg class="a" style="left:0;top:714px" width="209" height="18" viewBox="1696 1031 209 18"><g fill="#bdbdbd" stroke="none"><path d="M1719 1037.500 h-1.500 a2.500 2.500 0 0 0 0 5 h1.500 M1724 1037.500 h1.500 a2.500 2.500 0 0 1 0 5 h-1.500 M1718.500 1040 h6" fill="none" stroke="#9a9a9a" stroke-width="1.500"/><text x="1744" y="1045" font-family="Liberation Serif,serif" font-style="italic" font-size="14">fx</text><path d="M1757 1043 h3 l-1.500 2z"/><rect x="1770" y="1035" width="14" height="11"/><circle cx="1777" cy="1040.500" r="3" fill="#444"/><circle cx="1804" cy="1040.500" r="5" fill="none" stroke="#bdbdbd" stroke-width="1.500"/><path d="M1800.500 1044 a5 5 0 0 1 7 -7z"/><path d="M1811 1043 h3 l-1.500 2z"/><path d="M1824 1036 h5 l1.500 1.500 h6.500 v8.500 h-13z"/><path d="M1851 1035.500 h11 v11 h-5.500 v-5.500 h-5.500z"/><path d="M1852 1042.500 h3.500 v3.500z"/><path d="M1878.500 1037 h12 v1.500 h-12z M1882 1035.500 h5 v1.500 h-5z M1879.500 1039.500 h10 l-1 7.500 h-8z"/><path d="M1882.500 1041 v5 M1884.500 1041 v5 M1886.500 1041 v5" stroke="#535353" stroke-width=".9"/></g></svg></div><div class="a" style="left:222px;top:0;width:2px;height:974px;background:#3a3a3a"></div></div>
<svg class="a" style="left:1656px;top:63px" width="264" height="12"><path d="M29.500 2.500 l-3.500 3.200 l3.500 3.200z M34 2.500 l-3.500 3.200 l3.500 3.200z M252 2.500 l3.500 3.200 l-3.500 3.200z M256.500 2.500 l3.500 3.200 l-3.500 3.200z" fill="#dcdcdc"/></svg>
<div id="status" class="a"><div class="a" style="left:0;top:0;width:48px;height:18px;background:#3a3a3a"></div><span class="a" style="left:8px;top:2px;font-size:10.500px;color:#f0f0f0;letter-spacing:-0.2px">66.67%</span>
<div class="a" style="left:48px;top:0;width:24px;height:18px;background:#4a4a4a;border-right:1px solid #3a3a3a"></div>
<svg class="a" style="left:55px;top:2px" width="13" height="13"><circle cx="6.500" cy="6.500" r="6" fill="#9a9a9a"/><path d="M4 3.500 h3.500 l2 2 v4.500 h-5.500z" fill="#e6e6e6"/><path d="M7.500 3.500 v2 h2" fill="none" stroke="#777" stroke-width=".8"/></svg>
<span class="a" style="left:118px;top:2px;font-size:10.500px;color:#f0f0f0;letter-spacing:-0.2px">Doc: 5.93M/5.84M</span>
<div class="a" style="left:243px;top:0;width:1px;height:18px;background:#3a3a3a"></div>
<svg class="a" style="left:245px;top:2px" width="10" height="12"><path d="M2 1 l6.500 5 l-6.500 5z" fill="#f0f0f0"/></svg>
<div class="a" style="left:256px;top:0;width:1341px;height:18px;background:linear-gradient(#3c3c3c,#464646)"></div>
</div>
<div id="taskbar" class="a"><div class="a" style="left:10px;top:-4px;width:30px;height:30px;border-radius:15px;background:#d8e4ec;border:2px solid #8fb0c8"></div><div class="a" style="left:60px;top:1px;width:42px;height:3px;background:#dfe6e6;border-radius:2px 2px 0 0"></div><div class="a" style="left:197px;top:1px;width:42px;height:3px;background:#e8eeee;border-radius:2px 2px 0 0"></div></div>
</body></html>
